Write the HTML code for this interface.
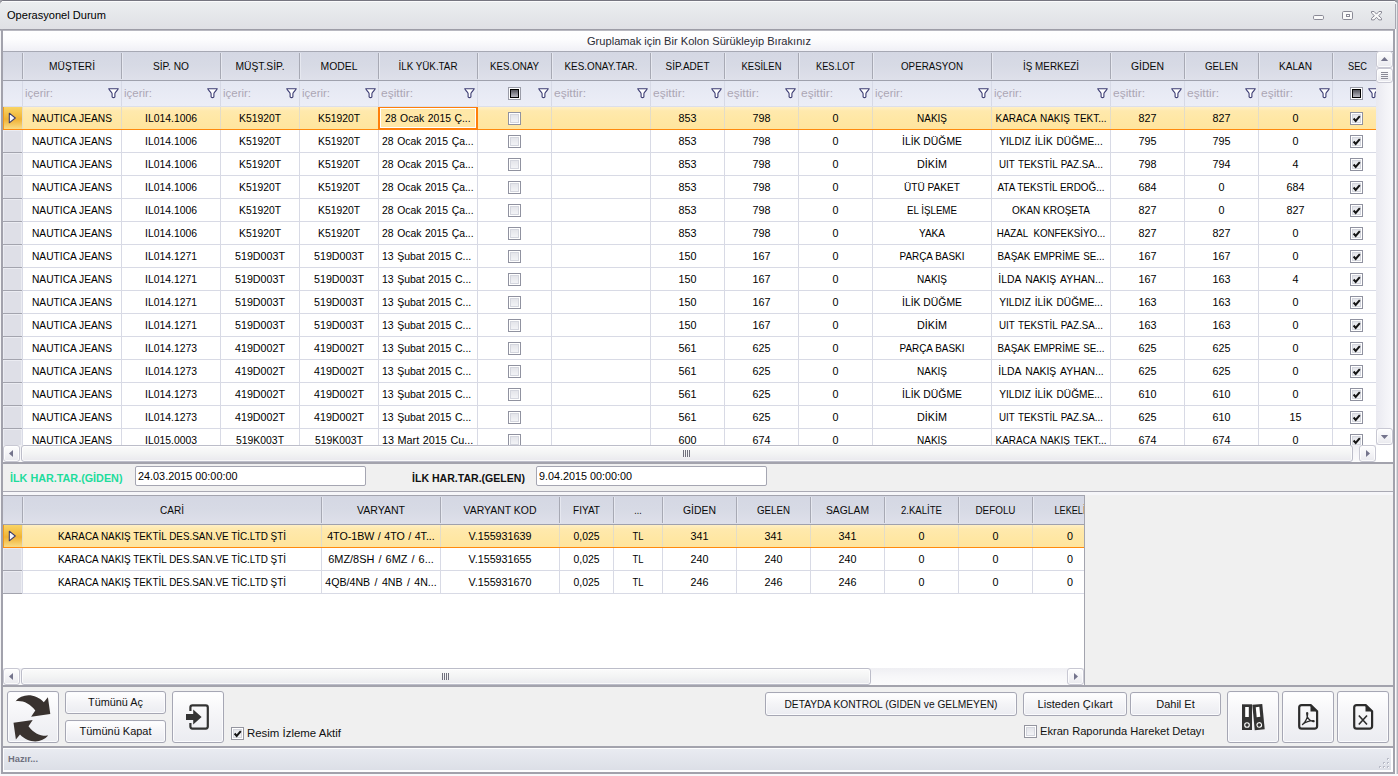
<!DOCTYPE html>
<html lang="tr"><head><meta charset="utf-8"><title>Operasyonel Durum</title>
<style>
html,body{margin:0;padding:0}
body{width:1398px;height:776px;overflow:hidden;background:#f0f0f0;position:relative;font-family:"Liberation Sans", sans-serif;font-size:10.5px;color:#000}
div,svg,span{position:absolute;display:block}
span{white-space:pre}
</style></head><body>
<div style="left:0px;top:0px;width:1398px;height:8px;background:#a4a4ac"></div>
<div style="left:0px;top:0px;width:1398px;height:29px;background:linear-gradient(#eceef0,#dfe0e5);border-radius:4px 5px 0 0;border-top:1px solid #767680;box-sizing:border-box"></div>
<div style="left:2px;top:1px;width:1393px;height:1px;background:#fbfbfc"></div>
<div style="left:0px;top:29px;width:1396px;height:1px;background:#9d9da7"></div>
<div style="left:0px;top:30px;width:1396px;height:1px;background:#b9b9c1"></div>
<svg style="left:1308px;top:6px" width="80" height="18" viewBox="1308 6 80 18">
<rect x="1313.5" y="15.5" width="10" height="4" rx="1.2" fill="#fafafa" stroke="#8a8a96"/>
<rect x="1342.5" y="11.5" width="10" height="8" rx="1.2" fill="#fafafa" stroke="#8a8a96"/>
<rect x="1346.5" y="14.5" width="3" height="2" fill="#fff" stroke="#8a8a96"/>
<path d="M1371.5 11.5h2.6l2.4 2.6 2.4-2.6h2.6v1.6l-2.9 2.6 2.9 2.6v1.6h-2.6l-2.4-2.6-2.4 2.6h-2.6v-1.6l2.9-2.6-2.9-2.6z" fill="#fafafa" stroke="#8a8a96" stroke-linejoin="round"/>
</svg>
<div style="left:1px;top:29px;width:2px;height:745px;background:#a2a2ac"></div>
<div style="left:1393px;top:29px;width:2px;height:745px;background:#a2a2ac"></div>
<div style="left:1395px;top:29px;width:1px;height:745px;background:#fafafa"></div>
<div style="left:1396px;top:29px;width:1px;height:745px;background:#dcdce1"></div>
<div style="left:1397px;top:4px;width:1px;height:770px;background:#b4b4bc"></div>
<div style="left:1395px;top:4px;width:1px;height:25px;background:#a8a8b2"></div>
<div style="left:0px;top:31px;width:1px;height:745px;background:#f4f4f6"></div>
<div style="left:3px;top:31px;width:1390px;height:20px;background:linear-gradient(#ffffff,#fdfdfe 40%,#f0f0f6)"></div>
<div style="left:3px;top:51px;width:1390px;height:1px;background:#a6a8b3"></div>
<div style="left:3px;top:52px;width:1373px;height:28px;background:linear-gradient(#d4d7e3,#d7dae5 50%,#dee0ea)"></div>
<div style="left:3px;top:80px;width:1373px;height:1px;background:#9fa1ad"></div>
<div style="left:3px;top:81px;width:1373px;height:26px;background:linear-gradient(#e4e7f2,#eceef7)"></div>
<div style="left:3px;top:106px;width:1373px;height:1px;background:#dcdfea"></div>
<div style="left:22px;top:53px;width:1px;height:26px;background:#a7a9b4"></div>
<div style="left:23px;top:53px;width:1px;height:26px;background:#e6e8f0"></div>
<div style="left:22px;top:81px;width:1px;height:25px;background:#d6d9e6"></div>
<div style="left:121px;top:53px;width:1px;height:26px;background:#a7a9b4"></div>
<div style="left:122px;top:53px;width:1px;height:26px;background:#e6e8f0"></div>
<div style="left:121px;top:81px;width:1px;height:25px;background:#d6d9e6"></div>
<div style="left:220px;top:53px;width:1px;height:26px;background:#a7a9b4"></div>
<div style="left:221px;top:53px;width:1px;height:26px;background:#e6e8f0"></div>
<div style="left:220px;top:81px;width:1px;height:25px;background:#d6d9e6"></div>
<div style="left:299px;top:53px;width:1px;height:26px;background:#a7a9b4"></div>
<div style="left:300px;top:53px;width:1px;height:26px;background:#e6e8f0"></div>
<div style="left:299px;top:81px;width:1px;height:25px;background:#d6d9e6"></div>
<div style="left:378px;top:53px;width:1px;height:26px;background:#a7a9b4"></div>
<div style="left:379px;top:53px;width:1px;height:26px;background:#e6e8f0"></div>
<div style="left:378px;top:81px;width:1px;height:25px;background:#d6d9e6"></div>
<div style="left:477px;top:53px;width:1px;height:26px;background:#a7a9b4"></div>
<div style="left:478px;top:53px;width:1px;height:26px;background:#e6e8f0"></div>
<div style="left:477px;top:81px;width:1px;height:25px;background:#d6d9e6"></div>
<div style="left:551px;top:53px;width:1px;height:26px;background:#a7a9b4"></div>
<div style="left:552px;top:53px;width:1px;height:26px;background:#e6e8f0"></div>
<div style="left:551px;top:81px;width:1px;height:25px;background:#d6d9e6"></div>
<div style="left:650px;top:53px;width:1px;height:26px;background:#a7a9b4"></div>
<div style="left:651px;top:53px;width:1px;height:26px;background:#e6e8f0"></div>
<div style="left:650px;top:81px;width:1px;height:25px;background:#d6d9e6"></div>
<div style="left:724px;top:53px;width:1px;height:26px;background:#a7a9b4"></div>
<div style="left:725px;top:53px;width:1px;height:26px;background:#e6e8f0"></div>
<div style="left:724px;top:81px;width:1px;height:25px;background:#d6d9e6"></div>
<div style="left:798px;top:53px;width:1px;height:26px;background:#a7a9b4"></div>
<div style="left:799px;top:53px;width:1px;height:26px;background:#e6e8f0"></div>
<div style="left:798px;top:81px;width:1px;height:25px;background:#d6d9e6"></div>
<div style="left:872px;top:53px;width:1px;height:26px;background:#a7a9b4"></div>
<div style="left:873px;top:53px;width:1px;height:26px;background:#e6e8f0"></div>
<div style="left:872px;top:81px;width:1px;height:25px;background:#d6d9e6"></div>
<div style="left:991px;top:53px;width:1px;height:26px;background:#a7a9b4"></div>
<div style="left:992px;top:53px;width:1px;height:26px;background:#e6e8f0"></div>
<div style="left:991px;top:81px;width:1px;height:25px;background:#d6d9e6"></div>
<div style="left:1110px;top:53px;width:1px;height:26px;background:#a7a9b4"></div>
<div style="left:1111px;top:53px;width:1px;height:26px;background:#e6e8f0"></div>
<div style="left:1110px;top:81px;width:1px;height:25px;background:#d6d9e6"></div>
<div style="left:1184px;top:53px;width:1px;height:26px;background:#a7a9b4"></div>
<div style="left:1185px;top:53px;width:1px;height:26px;background:#e6e8f0"></div>
<div style="left:1184px;top:81px;width:1px;height:25px;background:#d6d9e6"></div>
<div style="left:1258px;top:53px;width:1px;height:26px;background:#a7a9b4"></div>
<div style="left:1259px;top:53px;width:1px;height:26px;background:#e6e8f0"></div>
<div style="left:1258px;top:81px;width:1px;height:25px;background:#d6d9e6"></div>
<div style="left:1332px;top:53px;width:1px;height:26px;background:#a7a9b4"></div>
<div style="left:1333px;top:53px;width:1px;height:26px;background:#e6e8f0"></div>
<div style="left:1332px;top:81px;width:1px;height:25px;background:#d6d9e6"></div>
<svg style="left:108px;top:88px" width="11" height="11" viewBox="0 0 11 11"><path d="M0.7 0.7H10.3C9.6 3 7.2 3.6 6.9 5.6V8.8Q5.5 10.4 4.1 8.8V5.6C3.800 3.600 1.400 3 0.7 0.7Z" fill="#fff" stroke="#3d3d73" stroke-width="1.1" stroke-linejoin="round"/></svg>
<svg style="left:207px;top:88px" width="11" height="11" viewBox="0 0 11 11"><path d="M0.7 0.7H10.3C9.6 3 7.2 3.6 6.9 5.6V8.8Q5.5 10.4 4.1 8.8V5.6C3.800 3.600 1.400 3 0.7 0.7Z" fill="#fff" stroke="#3d3d73" stroke-width="1.1" stroke-linejoin="round"/></svg>
<svg style="left:286px;top:88px" width="11" height="11" viewBox="0 0 11 11"><path d="M0.7 0.7H10.3C9.6 3 7.2 3.6 6.9 5.6V8.8Q5.5 10.4 4.1 8.8V5.6C3.800 3.600 1.400 3 0.7 0.7Z" fill="#fff" stroke="#3d3d73" stroke-width="1.1" stroke-linejoin="round"/></svg>
<svg style="left:365px;top:88px" width="11" height="11" viewBox="0 0 11 11"><path d="M0.7 0.7H10.3C9.6 3 7.2 3.6 6.9 5.6V8.8Q5.5 10.4 4.1 8.8V5.6C3.800 3.600 1.400 3 0.7 0.7Z" fill="#fff" stroke="#3d3d73" stroke-width="1.1" stroke-linejoin="round"/></svg>
<svg style="left:464px;top:88px" width="11" height="11" viewBox="0 0 11 11"><path d="M0.7 0.7H10.3C9.6 3 7.2 3.6 6.9 5.6V8.8Q5.5 10.4 4.1 8.8V5.6C3.800 3.600 1.400 3 0.7 0.7Z" fill="#fff" stroke="#3d3d73" stroke-width="1.1" stroke-linejoin="round"/></svg>
<div style="left:508px;top:87px;width:11px;height:11px;border:1px solid #9a9ca8;background:#fff"><div style="left:1px;top:1px;width:7px;height:7px;border:1px solid #000;background:linear-gradient(#55555c,#b8b8c0)"></div></div>
<svg style="left:538px;top:88px" width="11" height="11" viewBox="0 0 11 11"><path d="M0.7 0.7H10.3C9.6 3 7.2 3.6 6.9 5.6V8.8Q5.5 10.4 4.1 8.8V5.6C3.800 3.600 1.400 3 0.7 0.7Z" fill="#fff" stroke="#3d3d73" stroke-width="1.1" stroke-linejoin="round"/></svg>
<svg style="left:637px;top:88px" width="11" height="11" viewBox="0 0 11 11"><path d="M0.7 0.7H10.3C9.6 3 7.2 3.6 6.9 5.6V8.8Q5.5 10.4 4.1 8.8V5.6C3.800 3.600 1.400 3 0.7 0.7Z" fill="#fff" stroke="#3d3d73" stroke-width="1.1" stroke-linejoin="round"/></svg>
<svg style="left:711px;top:88px" width="11" height="11" viewBox="0 0 11 11"><path d="M0.7 0.7H10.3C9.6 3 7.2 3.6 6.9 5.6V8.8Q5.5 10.4 4.1 8.8V5.6C3.800 3.600 1.400 3 0.7 0.7Z" fill="#fff" stroke="#3d3d73" stroke-width="1.1" stroke-linejoin="round"/></svg>
<svg style="left:785px;top:88px" width="11" height="11" viewBox="0 0 11 11"><path d="M0.7 0.7H10.3C9.6 3 7.2 3.6 6.9 5.6V8.8Q5.5 10.4 4.1 8.8V5.6C3.800 3.600 1.400 3 0.7 0.7Z" fill="#fff" stroke="#3d3d73" stroke-width="1.1" stroke-linejoin="round"/></svg>
<svg style="left:859px;top:88px" width="11" height="11" viewBox="0 0 11 11"><path d="M0.7 0.7H10.3C9.6 3 7.2 3.6 6.9 5.6V8.8Q5.5 10.4 4.1 8.8V5.6C3.800 3.600 1.400 3 0.7 0.7Z" fill="#fff" stroke="#3d3d73" stroke-width="1.1" stroke-linejoin="round"/></svg>
<svg style="left:978px;top:88px" width="11" height="11" viewBox="0 0 11 11"><path d="M0.7 0.7H10.3C9.6 3 7.2 3.6 6.9 5.6V8.8Q5.5 10.4 4.1 8.8V5.6C3.800 3.600 1.400 3 0.7 0.7Z" fill="#fff" stroke="#3d3d73" stroke-width="1.1" stroke-linejoin="round"/></svg>
<svg style="left:1097px;top:88px" width="11" height="11" viewBox="0 0 11 11"><path d="M0.7 0.7H10.3C9.6 3 7.2 3.6 6.9 5.6V8.8Q5.5 10.4 4.1 8.8V5.6C3.800 3.600 1.400 3 0.7 0.7Z" fill="#fff" stroke="#3d3d73" stroke-width="1.1" stroke-linejoin="round"/></svg>
<svg style="left:1171px;top:88px" width="11" height="11" viewBox="0 0 11 11"><path d="M0.7 0.7H10.3C9.6 3 7.2 3.6 6.9 5.6V8.8Q5.5 10.4 4.1 8.8V5.6C3.800 3.600 1.400 3 0.7 0.7Z" fill="#fff" stroke="#3d3d73" stroke-width="1.1" stroke-linejoin="round"/></svg>
<svg style="left:1245px;top:88px" width="11" height="11" viewBox="0 0 11 11"><path d="M0.7 0.7H10.3C9.6 3 7.2 3.6 6.9 5.6V8.8Q5.5 10.4 4.1 8.8V5.6C3.800 3.600 1.400 3 0.7 0.7Z" fill="#fff" stroke="#3d3d73" stroke-width="1.1" stroke-linejoin="round"/></svg>
<svg style="left:1319px;top:88px" width="11" height="11" viewBox="0 0 11 11"><path d="M0.7 0.7H10.3C9.6 3 7.2 3.6 6.9 5.6V8.8Q5.5 10.4 4.1 8.8V5.6C3.800 3.600 1.400 3 0.7 0.7Z" fill="#fff" stroke="#3d3d73" stroke-width="1.1" stroke-linejoin="round"/></svg>
<div style="left:1350px;top:87px;width:11px;height:11px;border:1px solid #9a9ca8;background:#fff"><div style="left:1px;top:1px;width:7px;height:7px;border:1px solid #000;background:linear-gradient(#55555c,#b8b8c0)"></div></div>
<svg style="left:1368px;top:88px" width="11" height="11" viewBox="0 0 11 11"><path d="M0.7 0.7H10.3C9.6 3 7.2 3.6 6.9 5.6V8.8Q5.5 10.4 4.1 8.8V5.6C3.800 3.600 1.400 3 0.7 0.7Z" fill="#fff" stroke="#3d3d73" stroke-width="1.1" stroke-linejoin="round"/></svg>
<div style="left:3px;top:107px;width:1373px;height:338px;overflow:hidden;background:#fff" id="g1">
<div style="left:19px;top:0px;width:1354px;height:22px;background:linear-gradient(#fff0c6,#ffe9ad 18%,#ffe7a4 60%,#ffe59e)"></div>
<div style="left:0px;top:22px;width:1373px;height:1px;background:#ff8a0e"></div>
<div style="left:0px;top:0px;width:19px;height:22px;background:linear-gradient(#f9d465,#f2b93c 45%,#f0b134 55%,#f9dc86);border-left:1px solid #f09a1c;box-sizing:border-box"></div>
<svg style="left:5px;top:5px" width="9" height="12" viewBox="0 0 9 12"><path d="M1.3 1.2L7.300 6 1.3 10.800z" fill="#f6f6fb" stroke="#3b3b6b" stroke-width="1.05" stroke-linejoin="round"/></svg>
<div style="left:19px;top:0px;width:1px;height:22px;background:#e3dcc8"></div>
<div style="left:118px;top:0px;width:1px;height:22px;background:#e3dcc8"></div>
<div style="left:217px;top:0px;width:1px;height:22px;background:#e3dcc8"></div>
<div style="left:296px;top:0px;width:1px;height:22px;background:#e3dcc8"></div>
<div style="left:375px;top:0px;width:1px;height:22px;background:#e3dcc8"></div>
<div style="left:474px;top:0px;width:1px;height:22px;background:#e3dcc8"></div>
<div style="left:548px;top:0px;width:1px;height:22px;background:#e3dcc8"></div>
<div style="left:647px;top:0px;width:1px;height:22px;background:#e3dcc8"></div>
<div style="left:721px;top:0px;width:1px;height:22px;background:#e3dcc8"></div>
<div style="left:795px;top:0px;width:1px;height:22px;background:#e3dcc8"></div>
<div style="left:869px;top:0px;width:1px;height:22px;background:#e3dcc8"></div>
<div style="left:988px;top:0px;width:1px;height:22px;background:#e3dcc8"></div>
<div style="left:1107px;top:0px;width:1px;height:22px;background:#e3dcc8"></div>
<div style="left:1181px;top:0px;width:1px;height:22px;background:#e3dcc8"></div>
<div style="left:1255px;top:0px;width:1px;height:22px;background:#e3dcc8"></div>
<div style="left:1329px;top:0px;width:1px;height:22px;background:#e3dcc8"></div>
<div style="left:505px;top:5px;width:11px;height:11px;border:1px solid #9092a0;background:#fff"><div style="left:1px;top:1px;width:7px;height:7px;border:1px solid #d4d6de;background:linear-gradient(#e4e5ea,#f2f3f6)"></div></div>
<div style="left:1347px;top:5px;width:11px;height:11px;border:1px solid #9092a0;background:#fff"><div style="left:1px;top:1px;width:7px;height:7px;border:1px solid #d4d6de;background:linear-gradient(#e4e5ea,#f2f3f6)"></div><svg style="left:1px;top:1px" width="9" height="9" viewBox="0 0 9 9"><path d="M1.6 4.500l2.100 2.500 4.100-4.900" fill="none" stroke="#151515" stroke-width="2"/></svg></div>
<div style="left:19px;top:45px;width:1354px;height:1px;background:#d8dae5"></div>
<div style="left:0px;top:23px;width:19px;height:22px;background:#dedfe7;border:1px solid #ebecf2;border-bottom:none;box-sizing:border-box"></div>
<div style="left:0px;top:45px;width:19px;height:1px;background:#a3a4ae"></div>
<div style="left:19px;top:23px;width:1px;height:22px;background:#d8dae5"></div>
<div style="left:118px;top:23px;width:1px;height:22px;background:#d8dae5"></div>
<div style="left:217px;top:23px;width:1px;height:22px;background:#d8dae5"></div>
<div style="left:296px;top:23px;width:1px;height:22px;background:#d8dae5"></div>
<div style="left:375px;top:23px;width:1px;height:22px;background:#d8dae5"></div>
<div style="left:474px;top:23px;width:1px;height:22px;background:#d8dae5"></div>
<div style="left:548px;top:23px;width:1px;height:22px;background:#d8dae5"></div>
<div style="left:647px;top:23px;width:1px;height:22px;background:#d8dae5"></div>
<div style="left:721px;top:23px;width:1px;height:22px;background:#d8dae5"></div>
<div style="left:795px;top:23px;width:1px;height:22px;background:#d8dae5"></div>
<div style="left:869px;top:23px;width:1px;height:22px;background:#d8dae5"></div>
<div style="left:988px;top:23px;width:1px;height:22px;background:#d8dae5"></div>
<div style="left:1107px;top:23px;width:1px;height:22px;background:#d8dae5"></div>
<div style="left:1181px;top:23px;width:1px;height:22px;background:#d8dae5"></div>
<div style="left:1255px;top:23px;width:1px;height:22px;background:#d8dae5"></div>
<div style="left:1329px;top:23px;width:1px;height:22px;background:#d8dae5"></div>
<div style="left:505px;top:28px;width:11px;height:11px;border:1px solid #9092a0;background:#fff"><div style="left:1px;top:1px;width:7px;height:7px;border:1px solid #d4d6de;background:linear-gradient(#e4e5ea,#f2f3f6)"></div></div>
<div style="left:1347px;top:28px;width:11px;height:11px;border:1px solid #9092a0;background:#fff"><div style="left:1px;top:1px;width:7px;height:7px;border:1px solid #d4d6de;background:linear-gradient(#e4e5ea,#f2f3f6)"></div><svg style="left:1px;top:1px" width="9" height="9" viewBox="0 0 9 9"><path d="M1.6 4.500l2.100 2.500 4.100-4.900" fill="none" stroke="#151515" stroke-width="2"/></svg></div>
<div style="left:19px;top:68px;width:1354px;height:1px;background:#d8dae5"></div>
<div style="left:0px;top:46px;width:19px;height:22px;background:#dedfe7;border:1px solid #ebecf2;border-bottom:none;box-sizing:border-box"></div>
<div style="left:0px;top:68px;width:19px;height:1px;background:#a3a4ae"></div>
<div style="left:19px;top:46px;width:1px;height:22px;background:#d8dae5"></div>
<div style="left:118px;top:46px;width:1px;height:22px;background:#d8dae5"></div>
<div style="left:217px;top:46px;width:1px;height:22px;background:#d8dae5"></div>
<div style="left:296px;top:46px;width:1px;height:22px;background:#d8dae5"></div>
<div style="left:375px;top:46px;width:1px;height:22px;background:#d8dae5"></div>
<div style="left:474px;top:46px;width:1px;height:22px;background:#d8dae5"></div>
<div style="left:548px;top:46px;width:1px;height:22px;background:#d8dae5"></div>
<div style="left:647px;top:46px;width:1px;height:22px;background:#d8dae5"></div>
<div style="left:721px;top:46px;width:1px;height:22px;background:#d8dae5"></div>
<div style="left:795px;top:46px;width:1px;height:22px;background:#d8dae5"></div>
<div style="left:869px;top:46px;width:1px;height:22px;background:#d8dae5"></div>
<div style="left:988px;top:46px;width:1px;height:22px;background:#d8dae5"></div>
<div style="left:1107px;top:46px;width:1px;height:22px;background:#d8dae5"></div>
<div style="left:1181px;top:46px;width:1px;height:22px;background:#d8dae5"></div>
<div style="left:1255px;top:46px;width:1px;height:22px;background:#d8dae5"></div>
<div style="left:1329px;top:46px;width:1px;height:22px;background:#d8dae5"></div>
<div style="left:505px;top:51px;width:11px;height:11px;border:1px solid #9092a0;background:#fff"><div style="left:1px;top:1px;width:7px;height:7px;border:1px solid #d4d6de;background:linear-gradient(#e4e5ea,#f2f3f6)"></div></div>
<div style="left:1347px;top:51px;width:11px;height:11px;border:1px solid #9092a0;background:#fff"><div style="left:1px;top:1px;width:7px;height:7px;border:1px solid #d4d6de;background:linear-gradient(#e4e5ea,#f2f3f6)"></div><svg style="left:1px;top:1px" width="9" height="9" viewBox="0 0 9 9"><path d="M1.6 4.500l2.100 2.500 4.100-4.900" fill="none" stroke="#151515" stroke-width="2"/></svg></div>
<div style="left:19px;top:91px;width:1354px;height:1px;background:#d8dae5"></div>
<div style="left:0px;top:69px;width:19px;height:22px;background:#dedfe7;border:1px solid #ebecf2;border-bottom:none;box-sizing:border-box"></div>
<div style="left:0px;top:91px;width:19px;height:1px;background:#a3a4ae"></div>
<div style="left:19px;top:69px;width:1px;height:22px;background:#d8dae5"></div>
<div style="left:118px;top:69px;width:1px;height:22px;background:#d8dae5"></div>
<div style="left:217px;top:69px;width:1px;height:22px;background:#d8dae5"></div>
<div style="left:296px;top:69px;width:1px;height:22px;background:#d8dae5"></div>
<div style="left:375px;top:69px;width:1px;height:22px;background:#d8dae5"></div>
<div style="left:474px;top:69px;width:1px;height:22px;background:#d8dae5"></div>
<div style="left:548px;top:69px;width:1px;height:22px;background:#d8dae5"></div>
<div style="left:647px;top:69px;width:1px;height:22px;background:#d8dae5"></div>
<div style="left:721px;top:69px;width:1px;height:22px;background:#d8dae5"></div>
<div style="left:795px;top:69px;width:1px;height:22px;background:#d8dae5"></div>
<div style="left:869px;top:69px;width:1px;height:22px;background:#d8dae5"></div>
<div style="left:988px;top:69px;width:1px;height:22px;background:#d8dae5"></div>
<div style="left:1107px;top:69px;width:1px;height:22px;background:#d8dae5"></div>
<div style="left:1181px;top:69px;width:1px;height:22px;background:#d8dae5"></div>
<div style="left:1255px;top:69px;width:1px;height:22px;background:#d8dae5"></div>
<div style="left:1329px;top:69px;width:1px;height:22px;background:#d8dae5"></div>
<div style="left:505px;top:74px;width:11px;height:11px;border:1px solid #9092a0;background:#fff"><div style="left:1px;top:1px;width:7px;height:7px;border:1px solid #d4d6de;background:linear-gradient(#e4e5ea,#f2f3f6)"></div></div>
<div style="left:1347px;top:74px;width:11px;height:11px;border:1px solid #9092a0;background:#fff"><div style="left:1px;top:1px;width:7px;height:7px;border:1px solid #d4d6de;background:linear-gradient(#e4e5ea,#f2f3f6)"></div><svg style="left:1px;top:1px" width="9" height="9" viewBox="0 0 9 9"><path d="M1.6 4.500l2.100 2.500 4.100-4.900" fill="none" stroke="#151515" stroke-width="2"/></svg></div>
<div style="left:19px;top:114px;width:1354px;height:1px;background:#d8dae5"></div>
<div style="left:0px;top:92px;width:19px;height:22px;background:#dedfe7;border:1px solid #ebecf2;border-bottom:none;box-sizing:border-box"></div>
<div style="left:0px;top:114px;width:19px;height:1px;background:#a3a4ae"></div>
<div style="left:19px;top:92px;width:1px;height:22px;background:#d8dae5"></div>
<div style="left:118px;top:92px;width:1px;height:22px;background:#d8dae5"></div>
<div style="left:217px;top:92px;width:1px;height:22px;background:#d8dae5"></div>
<div style="left:296px;top:92px;width:1px;height:22px;background:#d8dae5"></div>
<div style="left:375px;top:92px;width:1px;height:22px;background:#d8dae5"></div>
<div style="left:474px;top:92px;width:1px;height:22px;background:#d8dae5"></div>
<div style="left:548px;top:92px;width:1px;height:22px;background:#d8dae5"></div>
<div style="left:647px;top:92px;width:1px;height:22px;background:#d8dae5"></div>
<div style="left:721px;top:92px;width:1px;height:22px;background:#d8dae5"></div>
<div style="left:795px;top:92px;width:1px;height:22px;background:#d8dae5"></div>
<div style="left:869px;top:92px;width:1px;height:22px;background:#d8dae5"></div>
<div style="left:988px;top:92px;width:1px;height:22px;background:#d8dae5"></div>
<div style="left:1107px;top:92px;width:1px;height:22px;background:#d8dae5"></div>
<div style="left:1181px;top:92px;width:1px;height:22px;background:#d8dae5"></div>
<div style="left:1255px;top:92px;width:1px;height:22px;background:#d8dae5"></div>
<div style="left:1329px;top:92px;width:1px;height:22px;background:#d8dae5"></div>
<div style="left:505px;top:97px;width:11px;height:11px;border:1px solid #9092a0;background:#fff"><div style="left:1px;top:1px;width:7px;height:7px;border:1px solid #d4d6de;background:linear-gradient(#e4e5ea,#f2f3f6)"></div></div>
<div style="left:1347px;top:97px;width:11px;height:11px;border:1px solid #9092a0;background:#fff"><div style="left:1px;top:1px;width:7px;height:7px;border:1px solid #d4d6de;background:linear-gradient(#e4e5ea,#f2f3f6)"></div><svg style="left:1px;top:1px" width="9" height="9" viewBox="0 0 9 9"><path d="M1.6 4.500l2.100 2.500 4.100-4.900" fill="none" stroke="#151515" stroke-width="2"/></svg></div>
<div style="left:19px;top:137px;width:1354px;height:1px;background:#d8dae5"></div>
<div style="left:0px;top:115px;width:19px;height:22px;background:#dedfe7;border:1px solid #ebecf2;border-bottom:none;box-sizing:border-box"></div>
<div style="left:0px;top:137px;width:19px;height:1px;background:#a3a4ae"></div>
<div style="left:19px;top:115px;width:1px;height:22px;background:#d8dae5"></div>
<div style="left:118px;top:115px;width:1px;height:22px;background:#d8dae5"></div>
<div style="left:217px;top:115px;width:1px;height:22px;background:#d8dae5"></div>
<div style="left:296px;top:115px;width:1px;height:22px;background:#d8dae5"></div>
<div style="left:375px;top:115px;width:1px;height:22px;background:#d8dae5"></div>
<div style="left:474px;top:115px;width:1px;height:22px;background:#d8dae5"></div>
<div style="left:548px;top:115px;width:1px;height:22px;background:#d8dae5"></div>
<div style="left:647px;top:115px;width:1px;height:22px;background:#d8dae5"></div>
<div style="left:721px;top:115px;width:1px;height:22px;background:#d8dae5"></div>
<div style="left:795px;top:115px;width:1px;height:22px;background:#d8dae5"></div>
<div style="left:869px;top:115px;width:1px;height:22px;background:#d8dae5"></div>
<div style="left:988px;top:115px;width:1px;height:22px;background:#d8dae5"></div>
<div style="left:1107px;top:115px;width:1px;height:22px;background:#d8dae5"></div>
<div style="left:1181px;top:115px;width:1px;height:22px;background:#d8dae5"></div>
<div style="left:1255px;top:115px;width:1px;height:22px;background:#d8dae5"></div>
<div style="left:1329px;top:115px;width:1px;height:22px;background:#d8dae5"></div>
<div style="left:505px;top:120px;width:11px;height:11px;border:1px solid #9092a0;background:#fff"><div style="left:1px;top:1px;width:7px;height:7px;border:1px solid #d4d6de;background:linear-gradient(#e4e5ea,#f2f3f6)"></div></div>
<div style="left:1347px;top:120px;width:11px;height:11px;border:1px solid #9092a0;background:#fff"><div style="left:1px;top:1px;width:7px;height:7px;border:1px solid #d4d6de;background:linear-gradient(#e4e5ea,#f2f3f6)"></div><svg style="left:1px;top:1px" width="9" height="9" viewBox="0 0 9 9"><path d="M1.6 4.500l2.100 2.500 4.100-4.900" fill="none" stroke="#151515" stroke-width="2"/></svg></div>
<div style="left:19px;top:160px;width:1354px;height:1px;background:#d8dae5"></div>
<div style="left:0px;top:138px;width:19px;height:22px;background:#dedfe7;border:1px solid #ebecf2;border-bottom:none;box-sizing:border-box"></div>
<div style="left:0px;top:160px;width:19px;height:1px;background:#a3a4ae"></div>
<div style="left:19px;top:138px;width:1px;height:22px;background:#d8dae5"></div>
<div style="left:118px;top:138px;width:1px;height:22px;background:#d8dae5"></div>
<div style="left:217px;top:138px;width:1px;height:22px;background:#d8dae5"></div>
<div style="left:296px;top:138px;width:1px;height:22px;background:#d8dae5"></div>
<div style="left:375px;top:138px;width:1px;height:22px;background:#d8dae5"></div>
<div style="left:474px;top:138px;width:1px;height:22px;background:#d8dae5"></div>
<div style="left:548px;top:138px;width:1px;height:22px;background:#d8dae5"></div>
<div style="left:647px;top:138px;width:1px;height:22px;background:#d8dae5"></div>
<div style="left:721px;top:138px;width:1px;height:22px;background:#d8dae5"></div>
<div style="left:795px;top:138px;width:1px;height:22px;background:#d8dae5"></div>
<div style="left:869px;top:138px;width:1px;height:22px;background:#d8dae5"></div>
<div style="left:988px;top:138px;width:1px;height:22px;background:#d8dae5"></div>
<div style="left:1107px;top:138px;width:1px;height:22px;background:#d8dae5"></div>
<div style="left:1181px;top:138px;width:1px;height:22px;background:#d8dae5"></div>
<div style="left:1255px;top:138px;width:1px;height:22px;background:#d8dae5"></div>
<div style="left:1329px;top:138px;width:1px;height:22px;background:#d8dae5"></div>
<div style="left:505px;top:143px;width:11px;height:11px;border:1px solid #9092a0;background:#fff"><div style="left:1px;top:1px;width:7px;height:7px;border:1px solid #d4d6de;background:linear-gradient(#e4e5ea,#f2f3f6)"></div></div>
<div style="left:1347px;top:143px;width:11px;height:11px;border:1px solid #9092a0;background:#fff"><div style="left:1px;top:1px;width:7px;height:7px;border:1px solid #d4d6de;background:linear-gradient(#e4e5ea,#f2f3f6)"></div><svg style="left:1px;top:1px" width="9" height="9" viewBox="0 0 9 9"><path d="M1.6 4.500l2.100 2.500 4.100-4.900" fill="none" stroke="#151515" stroke-width="2"/></svg></div>
<div style="left:19px;top:183px;width:1354px;height:1px;background:#d8dae5"></div>
<div style="left:0px;top:161px;width:19px;height:22px;background:#dedfe7;border:1px solid #ebecf2;border-bottom:none;box-sizing:border-box"></div>
<div style="left:0px;top:183px;width:19px;height:1px;background:#a3a4ae"></div>
<div style="left:19px;top:161px;width:1px;height:22px;background:#d8dae5"></div>
<div style="left:118px;top:161px;width:1px;height:22px;background:#d8dae5"></div>
<div style="left:217px;top:161px;width:1px;height:22px;background:#d8dae5"></div>
<div style="left:296px;top:161px;width:1px;height:22px;background:#d8dae5"></div>
<div style="left:375px;top:161px;width:1px;height:22px;background:#d8dae5"></div>
<div style="left:474px;top:161px;width:1px;height:22px;background:#d8dae5"></div>
<div style="left:548px;top:161px;width:1px;height:22px;background:#d8dae5"></div>
<div style="left:647px;top:161px;width:1px;height:22px;background:#d8dae5"></div>
<div style="left:721px;top:161px;width:1px;height:22px;background:#d8dae5"></div>
<div style="left:795px;top:161px;width:1px;height:22px;background:#d8dae5"></div>
<div style="left:869px;top:161px;width:1px;height:22px;background:#d8dae5"></div>
<div style="left:988px;top:161px;width:1px;height:22px;background:#d8dae5"></div>
<div style="left:1107px;top:161px;width:1px;height:22px;background:#d8dae5"></div>
<div style="left:1181px;top:161px;width:1px;height:22px;background:#d8dae5"></div>
<div style="left:1255px;top:161px;width:1px;height:22px;background:#d8dae5"></div>
<div style="left:1329px;top:161px;width:1px;height:22px;background:#d8dae5"></div>
<div style="left:505px;top:166px;width:11px;height:11px;border:1px solid #9092a0;background:#fff"><div style="left:1px;top:1px;width:7px;height:7px;border:1px solid #d4d6de;background:linear-gradient(#e4e5ea,#f2f3f6)"></div></div>
<div style="left:1347px;top:166px;width:11px;height:11px;border:1px solid #9092a0;background:#fff"><div style="left:1px;top:1px;width:7px;height:7px;border:1px solid #d4d6de;background:linear-gradient(#e4e5ea,#f2f3f6)"></div><svg style="left:1px;top:1px" width="9" height="9" viewBox="0 0 9 9"><path d="M1.6 4.500l2.100 2.500 4.100-4.900" fill="none" stroke="#151515" stroke-width="2"/></svg></div>
<div style="left:19px;top:206px;width:1354px;height:1px;background:#d8dae5"></div>
<div style="left:0px;top:184px;width:19px;height:22px;background:#dedfe7;border:1px solid #ebecf2;border-bottom:none;box-sizing:border-box"></div>
<div style="left:0px;top:206px;width:19px;height:1px;background:#a3a4ae"></div>
<div style="left:19px;top:184px;width:1px;height:22px;background:#d8dae5"></div>
<div style="left:118px;top:184px;width:1px;height:22px;background:#d8dae5"></div>
<div style="left:217px;top:184px;width:1px;height:22px;background:#d8dae5"></div>
<div style="left:296px;top:184px;width:1px;height:22px;background:#d8dae5"></div>
<div style="left:375px;top:184px;width:1px;height:22px;background:#d8dae5"></div>
<div style="left:474px;top:184px;width:1px;height:22px;background:#d8dae5"></div>
<div style="left:548px;top:184px;width:1px;height:22px;background:#d8dae5"></div>
<div style="left:647px;top:184px;width:1px;height:22px;background:#d8dae5"></div>
<div style="left:721px;top:184px;width:1px;height:22px;background:#d8dae5"></div>
<div style="left:795px;top:184px;width:1px;height:22px;background:#d8dae5"></div>
<div style="left:869px;top:184px;width:1px;height:22px;background:#d8dae5"></div>
<div style="left:988px;top:184px;width:1px;height:22px;background:#d8dae5"></div>
<div style="left:1107px;top:184px;width:1px;height:22px;background:#d8dae5"></div>
<div style="left:1181px;top:184px;width:1px;height:22px;background:#d8dae5"></div>
<div style="left:1255px;top:184px;width:1px;height:22px;background:#d8dae5"></div>
<div style="left:1329px;top:184px;width:1px;height:22px;background:#d8dae5"></div>
<div style="left:505px;top:189px;width:11px;height:11px;border:1px solid #9092a0;background:#fff"><div style="left:1px;top:1px;width:7px;height:7px;border:1px solid #d4d6de;background:linear-gradient(#e4e5ea,#f2f3f6)"></div></div>
<div style="left:1347px;top:189px;width:11px;height:11px;border:1px solid #9092a0;background:#fff"><div style="left:1px;top:1px;width:7px;height:7px;border:1px solid #d4d6de;background:linear-gradient(#e4e5ea,#f2f3f6)"></div><svg style="left:1px;top:1px" width="9" height="9" viewBox="0 0 9 9"><path d="M1.6 4.500l2.100 2.500 4.100-4.900" fill="none" stroke="#151515" stroke-width="2"/></svg></div>
<div style="left:19px;top:229px;width:1354px;height:1px;background:#d8dae5"></div>
<div style="left:0px;top:207px;width:19px;height:22px;background:#dedfe7;border:1px solid #ebecf2;border-bottom:none;box-sizing:border-box"></div>
<div style="left:0px;top:229px;width:19px;height:1px;background:#a3a4ae"></div>
<div style="left:19px;top:207px;width:1px;height:22px;background:#d8dae5"></div>
<div style="left:118px;top:207px;width:1px;height:22px;background:#d8dae5"></div>
<div style="left:217px;top:207px;width:1px;height:22px;background:#d8dae5"></div>
<div style="left:296px;top:207px;width:1px;height:22px;background:#d8dae5"></div>
<div style="left:375px;top:207px;width:1px;height:22px;background:#d8dae5"></div>
<div style="left:474px;top:207px;width:1px;height:22px;background:#d8dae5"></div>
<div style="left:548px;top:207px;width:1px;height:22px;background:#d8dae5"></div>
<div style="left:647px;top:207px;width:1px;height:22px;background:#d8dae5"></div>
<div style="left:721px;top:207px;width:1px;height:22px;background:#d8dae5"></div>
<div style="left:795px;top:207px;width:1px;height:22px;background:#d8dae5"></div>
<div style="left:869px;top:207px;width:1px;height:22px;background:#d8dae5"></div>
<div style="left:988px;top:207px;width:1px;height:22px;background:#d8dae5"></div>
<div style="left:1107px;top:207px;width:1px;height:22px;background:#d8dae5"></div>
<div style="left:1181px;top:207px;width:1px;height:22px;background:#d8dae5"></div>
<div style="left:1255px;top:207px;width:1px;height:22px;background:#d8dae5"></div>
<div style="left:1329px;top:207px;width:1px;height:22px;background:#d8dae5"></div>
<div style="left:505px;top:212px;width:11px;height:11px;border:1px solid #9092a0;background:#fff"><div style="left:1px;top:1px;width:7px;height:7px;border:1px solid #d4d6de;background:linear-gradient(#e4e5ea,#f2f3f6)"></div></div>
<div style="left:1347px;top:212px;width:11px;height:11px;border:1px solid #9092a0;background:#fff"><div style="left:1px;top:1px;width:7px;height:7px;border:1px solid #d4d6de;background:linear-gradient(#e4e5ea,#f2f3f6)"></div><svg style="left:1px;top:1px" width="9" height="9" viewBox="0 0 9 9"><path d="M1.6 4.500l2.100 2.500 4.100-4.900" fill="none" stroke="#151515" stroke-width="2"/></svg></div>
<div style="left:19px;top:252px;width:1354px;height:1px;background:#d8dae5"></div>
<div style="left:0px;top:230px;width:19px;height:22px;background:#dedfe7;border:1px solid #ebecf2;border-bottom:none;box-sizing:border-box"></div>
<div style="left:0px;top:252px;width:19px;height:1px;background:#a3a4ae"></div>
<div style="left:19px;top:230px;width:1px;height:22px;background:#d8dae5"></div>
<div style="left:118px;top:230px;width:1px;height:22px;background:#d8dae5"></div>
<div style="left:217px;top:230px;width:1px;height:22px;background:#d8dae5"></div>
<div style="left:296px;top:230px;width:1px;height:22px;background:#d8dae5"></div>
<div style="left:375px;top:230px;width:1px;height:22px;background:#d8dae5"></div>
<div style="left:474px;top:230px;width:1px;height:22px;background:#d8dae5"></div>
<div style="left:548px;top:230px;width:1px;height:22px;background:#d8dae5"></div>
<div style="left:647px;top:230px;width:1px;height:22px;background:#d8dae5"></div>
<div style="left:721px;top:230px;width:1px;height:22px;background:#d8dae5"></div>
<div style="left:795px;top:230px;width:1px;height:22px;background:#d8dae5"></div>
<div style="left:869px;top:230px;width:1px;height:22px;background:#d8dae5"></div>
<div style="left:988px;top:230px;width:1px;height:22px;background:#d8dae5"></div>
<div style="left:1107px;top:230px;width:1px;height:22px;background:#d8dae5"></div>
<div style="left:1181px;top:230px;width:1px;height:22px;background:#d8dae5"></div>
<div style="left:1255px;top:230px;width:1px;height:22px;background:#d8dae5"></div>
<div style="left:1329px;top:230px;width:1px;height:22px;background:#d8dae5"></div>
<div style="left:505px;top:235px;width:11px;height:11px;border:1px solid #9092a0;background:#fff"><div style="left:1px;top:1px;width:7px;height:7px;border:1px solid #d4d6de;background:linear-gradient(#e4e5ea,#f2f3f6)"></div></div>
<div style="left:1347px;top:235px;width:11px;height:11px;border:1px solid #9092a0;background:#fff"><div style="left:1px;top:1px;width:7px;height:7px;border:1px solid #d4d6de;background:linear-gradient(#e4e5ea,#f2f3f6)"></div><svg style="left:1px;top:1px" width="9" height="9" viewBox="0 0 9 9"><path d="M1.6 4.500l2.100 2.500 4.100-4.900" fill="none" stroke="#151515" stroke-width="2"/></svg></div>
<div style="left:19px;top:275px;width:1354px;height:1px;background:#d8dae5"></div>
<div style="left:0px;top:253px;width:19px;height:22px;background:#dedfe7;border:1px solid #ebecf2;border-bottom:none;box-sizing:border-box"></div>
<div style="left:0px;top:275px;width:19px;height:1px;background:#a3a4ae"></div>
<div style="left:19px;top:253px;width:1px;height:22px;background:#d8dae5"></div>
<div style="left:118px;top:253px;width:1px;height:22px;background:#d8dae5"></div>
<div style="left:217px;top:253px;width:1px;height:22px;background:#d8dae5"></div>
<div style="left:296px;top:253px;width:1px;height:22px;background:#d8dae5"></div>
<div style="left:375px;top:253px;width:1px;height:22px;background:#d8dae5"></div>
<div style="left:474px;top:253px;width:1px;height:22px;background:#d8dae5"></div>
<div style="left:548px;top:253px;width:1px;height:22px;background:#d8dae5"></div>
<div style="left:647px;top:253px;width:1px;height:22px;background:#d8dae5"></div>
<div style="left:721px;top:253px;width:1px;height:22px;background:#d8dae5"></div>
<div style="left:795px;top:253px;width:1px;height:22px;background:#d8dae5"></div>
<div style="left:869px;top:253px;width:1px;height:22px;background:#d8dae5"></div>
<div style="left:988px;top:253px;width:1px;height:22px;background:#d8dae5"></div>
<div style="left:1107px;top:253px;width:1px;height:22px;background:#d8dae5"></div>
<div style="left:1181px;top:253px;width:1px;height:22px;background:#d8dae5"></div>
<div style="left:1255px;top:253px;width:1px;height:22px;background:#d8dae5"></div>
<div style="left:1329px;top:253px;width:1px;height:22px;background:#d8dae5"></div>
<div style="left:505px;top:258px;width:11px;height:11px;border:1px solid #9092a0;background:#fff"><div style="left:1px;top:1px;width:7px;height:7px;border:1px solid #d4d6de;background:linear-gradient(#e4e5ea,#f2f3f6)"></div></div>
<div style="left:1347px;top:258px;width:11px;height:11px;border:1px solid #9092a0;background:#fff"><div style="left:1px;top:1px;width:7px;height:7px;border:1px solid #d4d6de;background:linear-gradient(#e4e5ea,#f2f3f6)"></div><svg style="left:1px;top:1px" width="9" height="9" viewBox="0 0 9 9"><path d="M1.6 4.500l2.100 2.500 4.100-4.900" fill="none" stroke="#151515" stroke-width="2"/></svg></div>
<div style="left:19px;top:298px;width:1354px;height:1px;background:#d8dae5"></div>
<div style="left:0px;top:276px;width:19px;height:22px;background:#dedfe7;border:1px solid #ebecf2;border-bottom:none;box-sizing:border-box"></div>
<div style="left:0px;top:298px;width:19px;height:1px;background:#a3a4ae"></div>
<div style="left:19px;top:276px;width:1px;height:22px;background:#d8dae5"></div>
<div style="left:118px;top:276px;width:1px;height:22px;background:#d8dae5"></div>
<div style="left:217px;top:276px;width:1px;height:22px;background:#d8dae5"></div>
<div style="left:296px;top:276px;width:1px;height:22px;background:#d8dae5"></div>
<div style="left:375px;top:276px;width:1px;height:22px;background:#d8dae5"></div>
<div style="left:474px;top:276px;width:1px;height:22px;background:#d8dae5"></div>
<div style="left:548px;top:276px;width:1px;height:22px;background:#d8dae5"></div>
<div style="left:647px;top:276px;width:1px;height:22px;background:#d8dae5"></div>
<div style="left:721px;top:276px;width:1px;height:22px;background:#d8dae5"></div>
<div style="left:795px;top:276px;width:1px;height:22px;background:#d8dae5"></div>
<div style="left:869px;top:276px;width:1px;height:22px;background:#d8dae5"></div>
<div style="left:988px;top:276px;width:1px;height:22px;background:#d8dae5"></div>
<div style="left:1107px;top:276px;width:1px;height:22px;background:#d8dae5"></div>
<div style="left:1181px;top:276px;width:1px;height:22px;background:#d8dae5"></div>
<div style="left:1255px;top:276px;width:1px;height:22px;background:#d8dae5"></div>
<div style="left:1329px;top:276px;width:1px;height:22px;background:#d8dae5"></div>
<div style="left:505px;top:281px;width:11px;height:11px;border:1px solid #9092a0;background:#fff"><div style="left:1px;top:1px;width:7px;height:7px;border:1px solid #d4d6de;background:linear-gradient(#e4e5ea,#f2f3f6)"></div></div>
<div style="left:1347px;top:281px;width:11px;height:11px;border:1px solid #9092a0;background:#fff"><div style="left:1px;top:1px;width:7px;height:7px;border:1px solid #d4d6de;background:linear-gradient(#e4e5ea,#f2f3f6)"></div><svg style="left:1px;top:1px" width="9" height="9" viewBox="0 0 9 9"><path d="M1.6 4.500l2.100 2.500 4.100-4.900" fill="none" stroke="#151515" stroke-width="2"/></svg></div>
<div style="left:19px;top:321px;width:1354px;height:1px;background:#d8dae5"></div>
<div style="left:0px;top:299px;width:19px;height:22px;background:#dedfe7;border:1px solid #ebecf2;border-bottom:none;box-sizing:border-box"></div>
<div style="left:0px;top:321px;width:19px;height:1px;background:#a3a4ae"></div>
<div style="left:19px;top:299px;width:1px;height:22px;background:#d8dae5"></div>
<div style="left:118px;top:299px;width:1px;height:22px;background:#d8dae5"></div>
<div style="left:217px;top:299px;width:1px;height:22px;background:#d8dae5"></div>
<div style="left:296px;top:299px;width:1px;height:22px;background:#d8dae5"></div>
<div style="left:375px;top:299px;width:1px;height:22px;background:#d8dae5"></div>
<div style="left:474px;top:299px;width:1px;height:22px;background:#d8dae5"></div>
<div style="left:548px;top:299px;width:1px;height:22px;background:#d8dae5"></div>
<div style="left:647px;top:299px;width:1px;height:22px;background:#d8dae5"></div>
<div style="left:721px;top:299px;width:1px;height:22px;background:#d8dae5"></div>
<div style="left:795px;top:299px;width:1px;height:22px;background:#d8dae5"></div>
<div style="left:869px;top:299px;width:1px;height:22px;background:#d8dae5"></div>
<div style="left:988px;top:299px;width:1px;height:22px;background:#d8dae5"></div>
<div style="left:1107px;top:299px;width:1px;height:22px;background:#d8dae5"></div>
<div style="left:1181px;top:299px;width:1px;height:22px;background:#d8dae5"></div>
<div style="left:1255px;top:299px;width:1px;height:22px;background:#d8dae5"></div>
<div style="left:1329px;top:299px;width:1px;height:22px;background:#d8dae5"></div>
<div style="left:505px;top:304px;width:11px;height:11px;border:1px solid #9092a0;background:#fff"><div style="left:1px;top:1px;width:7px;height:7px;border:1px solid #d4d6de;background:linear-gradient(#e4e5ea,#f2f3f6)"></div></div>
<div style="left:1347px;top:304px;width:11px;height:11px;border:1px solid #9092a0;background:#fff"><div style="left:1px;top:1px;width:7px;height:7px;border:1px solid #d4d6de;background:linear-gradient(#e4e5ea,#f2f3f6)"></div><svg style="left:1px;top:1px" width="9" height="9" viewBox="0 0 9 9"><path d="M1.6 4.500l2.100 2.500 4.100-4.900" fill="none" stroke="#151515" stroke-width="2"/></svg></div>
<div style="left:19px;top:344px;width:1354px;height:1px;background:#d8dae5"></div>
<div style="left:0px;top:322px;width:19px;height:22px;background:#dedfe7;border:1px solid #ebecf2;border-bottom:none;box-sizing:border-box"></div>
<div style="left:0px;top:344px;width:19px;height:1px;background:#a3a4ae"></div>
<div style="left:19px;top:322px;width:1px;height:22px;background:#d8dae5"></div>
<div style="left:118px;top:322px;width:1px;height:22px;background:#d8dae5"></div>
<div style="left:217px;top:322px;width:1px;height:22px;background:#d8dae5"></div>
<div style="left:296px;top:322px;width:1px;height:22px;background:#d8dae5"></div>
<div style="left:375px;top:322px;width:1px;height:22px;background:#d8dae5"></div>
<div style="left:474px;top:322px;width:1px;height:22px;background:#d8dae5"></div>
<div style="left:548px;top:322px;width:1px;height:22px;background:#d8dae5"></div>
<div style="left:647px;top:322px;width:1px;height:22px;background:#d8dae5"></div>
<div style="left:721px;top:322px;width:1px;height:22px;background:#d8dae5"></div>
<div style="left:795px;top:322px;width:1px;height:22px;background:#d8dae5"></div>
<div style="left:869px;top:322px;width:1px;height:22px;background:#d8dae5"></div>
<div style="left:988px;top:322px;width:1px;height:22px;background:#d8dae5"></div>
<div style="left:1107px;top:322px;width:1px;height:22px;background:#d8dae5"></div>
<div style="left:1181px;top:322px;width:1px;height:22px;background:#d8dae5"></div>
<div style="left:1255px;top:322px;width:1px;height:22px;background:#d8dae5"></div>
<div style="left:1329px;top:322px;width:1px;height:22px;background:#d8dae5"></div>
<div style="left:505px;top:327px;width:11px;height:11px;border:1px solid #9092a0;background:#fff"><div style="left:1px;top:1px;width:7px;height:7px;border:1px solid #d4d6de;background:linear-gradient(#e4e5ea,#f2f3f6)"></div></div>
<div style="left:1347px;top:327px;width:11px;height:11px;border:1px solid #9092a0;background:#fff"><div style="left:1px;top:1px;width:7px;height:7px;border:1px solid #d4d6de;background:linear-gradient(#e4e5ea,#f2f3f6)"></div><svg style="left:1px;top:1px" width="9" height="9" viewBox="0 0 9 9"><path d="M1.6 4.500l2.100 2.500 4.100-4.900" fill="none" stroke="#151515" stroke-width="2"/></svg></div>
<div style="left:375px;top:0px;width:100px;height:23px;border:2px solid #ff7f0a;border-top-width:1px;box-sizing:border-box;background:#fff"></div>
<div style="left:378px;top:2px;width:94px;height:18px;background:#ffe8a8"></div>
</div>
<div style="left:1376px;top:52px;width:17px;height:393px;background:linear-gradient(90deg,#e9e9f0,#f3f3f7 60%,#f8f8fb)"></div>
<div style="left:1376px;top:51px;width:17px;height:17px;border:1px solid #c8c8d3;border-radius:3px;box-sizing:border-box;background:linear-gradient(#fefefe,#f3f3f6 55%,#e9e9ee);box-shadow:inset 0 0 0 1px rgba(255,255,255,.8)"></div>
<div style="left:1376px;top:428px;width:17px;height:17px;border:1px solid #c8c8d3;border-radius:3px;box-sizing:border-box;background:linear-gradient(#fefefe,#f3f3f6 55%,#e9e9ee);box-shadow:inset 0 0 0 1px rgba(255,255,255,.8)"></div>
<div style="left:1376px;top:68px;width:17px;height:15px;border:1px solid #c8c8d3;border-radius:3px;box-sizing:border-box;background:linear-gradient(#fefefe,#f3f3f6 55%,#e9e9ee);box-shadow:inset 0 0 0 1px rgba(255,255,255,.8)"></div>
<div style="left:1381px;top:72px;width:7px;height:1px;background:#8a8a96"></div>
<div style="left:1381px;top:74px;width:7px;height:1px;background:#8a8a96"></div>
<div style="left:1381px;top:76px;width:7px;height:1px;background:#8a8a96"></div>
<div style="left:1381px;top:78px;width:7px;height:1px;background:#8a8a96"></div>
<svg style="left:1380px;top:56px" width="9" height="6" viewBox="0 0 9 6"><path d="M0.8 5L4.500 1 8.200 5z" fill="#74748c"/></svg>
<svg style="left:1380px;top:434px" width="9" height="6" viewBox="0 0 9 6"><path d="M0.8 1L4.500 5 8.200 1z" fill="#74748c"/></svg>
<div style="left:3px;top:445px;width:1373px;height:17px;background:linear-gradient(#efeff3,#f7f7f9 50%,#fbfbfc)"></div>
<div style="left:3px;top:445px;width:17px;height:17px;border:1px solid #c8c8d3;border-radius:3px;box-sizing:border-box;background:linear-gradient(#fefefe,#f3f3f6 55%,#e9e9ee);box-shadow:inset 0 0 0 1px rgba(255,255,255,.8)"></div>
<div style="left:1359px;top:445px;width:17px;height:17px;border:1px solid #c8c8d3;border-radius:3px;box-sizing:border-box;background:linear-gradient(#fefefe,#f3f3f6 55%,#e9e9ee);box-shadow:inset 0 0 0 1px rgba(255,255,255,.8)"></div>
<div style="left:21px;top:445px;width:1332px;height:17px;border:1px solid #bcbdc9;border-radius:3px;box-sizing:border-box;background:linear-gradient(#fbfbfb,#f3f4f4 50%,#e9e9ee);box-shadow:inset 0 0 0 1px rgba(255,255,255,.7)"></div>
<svg style="left:8px;top:449px" width="6" height="9" viewBox="0 0 6 9"><path d="M5 1L1 4.500 5 8z" fill="#74748c"/></svg>
<svg style="left:1365px;top:449px" width="6" height="9" viewBox="0 0 6 9"><path d="M1 1L5 4.500 1 8z" fill="#74748c"/></svg>
<div style="left:683px;top:450px;width:1px;height:7px;background:#70707c"></div>
<div style="left:685px;top:450px;width:1px;height:7px;background:#70707c"></div>
<div style="left:687px;top:450px;width:1px;height:7px;background:#70707c"></div>
<div style="left:689px;top:450px;width:1px;height:7px;background:#70707c"></div>
<div style="left:1376px;top:445px;width:17px;height:17px;background:#fff"></div>
<div style="left:3px;top:462px;width:1390px;height:2px;background:#a3a3ad"></div>
<div style="left:3px;top:464px;width:1390px;height:27px;background:#f0f0f0"></div>
<div style="left:3px;top:491px;width:1390px;height:1px;background:#a9a9b3"></div>
<div style="left:3px;top:492px;width:1390px;height:3px;background:#f6f6f9"></div>
<div style="left:135px;top:466px;width:231px;height:20px;border:1px solid #a5a6b2;border-radius:2px;box-sizing:border-box;background:#fff"></div>
<div style="left:536px;top:466px;width:231px;height:20px;border:1px solid #a5a6b2;border-radius:2px;box-sizing:border-box;background:#fff"></div>
<div style="left:3px;top:495px;width:1082px;height:1px;background:#a3a4ae"></div>
<div style="left:1084px;top:495px;width:1px;height:191px;background:#a3a4ae"></div>
<div style="left:3px;top:496px;width:1081px;height:28px;background:linear-gradient(#d4d7e3,#d7dae5 50%,#dee0ea)"></div>
<div style="left:3px;top:524px;width:1081px;height:1px;background:#9fa1ad"></div>
<div style="left:3px;top:525px;width:1081px;height:143px;background:#fff"></div>
<div style="left:22px;top:497px;width:1px;height:26px;background:#a7a9b4"></div>
<div style="left:23px;top:497px;width:1px;height:26px;background:#e6e8f0"></div>
<div style="left:321px;top:497px;width:1px;height:26px;background:#a7a9b4"></div>
<div style="left:322px;top:497px;width:1px;height:26px;background:#e6e8f0"></div>
<div style="left:440px;top:497px;width:1px;height:26px;background:#a7a9b4"></div>
<div style="left:441px;top:497px;width:1px;height:26px;background:#e6e8f0"></div>
<div style="left:559px;top:497px;width:1px;height:26px;background:#a7a9b4"></div>
<div style="left:560px;top:497px;width:1px;height:26px;background:#e6e8f0"></div>
<div style="left:613px;top:497px;width:1px;height:26px;background:#a7a9b4"></div>
<div style="left:614px;top:497px;width:1px;height:26px;background:#e6e8f0"></div>
<div style="left:662px;top:497px;width:1px;height:26px;background:#a7a9b4"></div>
<div style="left:663px;top:497px;width:1px;height:26px;background:#e6e8f0"></div>
<div style="left:736px;top:497px;width:1px;height:26px;background:#a7a9b4"></div>
<div style="left:737px;top:497px;width:1px;height:26px;background:#e6e8f0"></div>
<div style="left:810px;top:497px;width:1px;height:26px;background:#a7a9b4"></div>
<div style="left:811px;top:497px;width:1px;height:26px;background:#e6e8f0"></div>
<div style="left:884px;top:497px;width:1px;height:26px;background:#a7a9b4"></div>
<div style="left:885px;top:497px;width:1px;height:26px;background:#e6e8f0"></div>
<div style="left:958px;top:497px;width:1px;height:26px;background:#a7a9b4"></div>
<div style="left:959px;top:497px;width:1px;height:26px;background:#e6e8f0"></div>
<div style="left:1032px;top:497px;width:1px;height:26px;background:#a7a9b4"></div>
<div style="left:1033px;top:497px;width:1px;height:26px;background:#e6e8f0"></div>
<div style="left:3px;top:496px;width:1081px;height:172px;overflow:hidden" id="g2">
</div>
<div style="left:22px;top:525px;width:1062px;height:22px;background:linear-gradient(#fff0c6,#ffe9ad 18%,#ffe7a4 60%,#ffe59e)"></div>
<div style="left:3px;top:547px;width:1081px;height:1px;background:#ff8a0e"></div>
<div style="left:3px;top:525px;width:19px;height:22px;background:linear-gradient(#f9d465,#f2b93c 45%,#f0b134 55%,#f9dc86);border-left:1px solid #f09a1c;box-sizing:border-box"></div>
<svg style="left:8px;top:530px" width="9" height="12" viewBox="0 0 9 12"><path d="M1.3 1.2L7.300 6 1.3 10.800z" fill="#f6f6fb" stroke="#3b3b6b" stroke-width="1.05" stroke-linejoin="round"/></svg>
<div style="left:22px;top:525px;width:1px;height:22px;background:#e3dcc8"></div>
<div style="left:321px;top:525px;width:1px;height:22px;background:#e3dcc8"></div>
<div style="left:440px;top:525px;width:1px;height:22px;background:#e3dcc8"></div>
<div style="left:559px;top:525px;width:1px;height:22px;background:#e3dcc8"></div>
<div style="left:613px;top:525px;width:1px;height:22px;background:#e3dcc8"></div>
<div style="left:662px;top:525px;width:1px;height:22px;background:#e3dcc8"></div>
<div style="left:736px;top:525px;width:1px;height:22px;background:#e3dcc8"></div>
<div style="left:810px;top:525px;width:1px;height:22px;background:#e3dcc8"></div>
<div style="left:884px;top:525px;width:1px;height:22px;background:#e3dcc8"></div>
<div style="left:958px;top:525px;width:1px;height:22px;background:#e3dcc8"></div>
<div style="left:1032px;top:525px;width:1px;height:22px;background:#e3dcc8"></div>
<div style="left:22px;top:570px;width:1062px;height:1px;background:#d8dae5"></div>
<div style="left:3px;top:548px;width:19px;height:22px;background:#dedfe7;border:1px solid #ebecf2;border-bottom:none;box-sizing:border-box"></div>
<div style="left:3px;top:570px;width:19px;height:1px;background:#a3a4ae"></div>
<div style="left:22px;top:548px;width:1px;height:22px;background:#d8dae5"></div>
<div style="left:321px;top:548px;width:1px;height:22px;background:#d8dae5"></div>
<div style="left:440px;top:548px;width:1px;height:22px;background:#d8dae5"></div>
<div style="left:559px;top:548px;width:1px;height:22px;background:#d8dae5"></div>
<div style="left:613px;top:548px;width:1px;height:22px;background:#d8dae5"></div>
<div style="left:662px;top:548px;width:1px;height:22px;background:#d8dae5"></div>
<div style="left:736px;top:548px;width:1px;height:22px;background:#d8dae5"></div>
<div style="left:810px;top:548px;width:1px;height:22px;background:#d8dae5"></div>
<div style="left:884px;top:548px;width:1px;height:22px;background:#d8dae5"></div>
<div style="left:958px;top:548px;width:1px;height:22px;background:#d8dae5"></div>
<div style="left:1032px;top:548px;width:1px;height:22px;background:#d8dae5"></div>
<div style="left:22px;top:593px;width:1062px;height:1px;background:#d8dae5"></div>
<div style="left:3px;top:571px;width:19px;height:22px;background:#dedfe7;border:1px solid #ebecf2;border-bottom:none;box-sizing:border-box"></div>
<div style="left:3px;top:593px;width:19px;height:1px;background:#a3a4ae"></div>
<div style="left:22px;top:571px;width:1px;height:22px;background:#d8dae5"></div>
<div style="left:321px;top:571px;width:1px;height:22px;background:#d8dae5"></div>
<div style="left:440px;top:571px;width:1px;height:22px;background:#d8dae5"></div>
<div style="left:559px;top:571px;width:1px;height:22px;background:#d8dae5"></div>
<div style="left:613px;top:571px;width:1px;height:22px;background:#d8dae5"></div>
<div style="left:662px;top:571px;width:1px;height:22px;background:#d8dae5"></div>
<div style="left:736px;top:571px;width:1px;height:22px;background:#d8dae5"></div>
<div style="left:810px;top:571px;width:1px;height:22px;background:#d8dae5"></div>
<div style="left:884px;top:571px;width:1px;height:22px;background:#d8dae5"></div>
<div style="left:958px;top:571px;width:1px;height:22px;background:#d8dae5"></div>
<div style="left:1032px;top:571px;width:1px;height:22px;background:#d8dae5"></div>
<div style="left:3px;top:668px;width:1081px;height:17px;background:linear-gradient(#efeff3,#f7f7f9 50%,#fbfbfc)"></div>
<div style="left:3px;top:668px;width:17px;height:17px;border:1px solid #c8c8d3;border-radius:3px;box-sizing:border-box;background:linear-gradient(#fefefe,#f3f3f6 55%,#e9e9ee);box-shadow:inset 0 0 0 1px rgba(255,255,255,.8)"></div>
<div style="left:1067px;top:668px;width:17px;height:17px;border:1px solid #c8c8d3;border-radius:3px;box-sizing:border-box;background:linear-gradient(#fefefe,#f3f3f6 55%,#e9e9ee);box-shadow:inset 0 0 0 1px rgba(255,255,255,.8)"></div>
<div style="left:21px;top:668px;width:850px;height:17px;border:1px solid #bcbdc9;border-radius:3px;box-sizing:border-box;background:linear-gradient(#fbfbfb,#f3f4f4 50%,#e9e9ee);box-shadow:inset 0 0 0 1px rgba(255,255,255,.7)"></div>
<svg style="left:8px;top:672px" width="6" height="9" viewBox="0 0 6 9"><path d="M5 1L1 4.500 5 8z" fill="#74748c"/></svg>
<svg style="left:1073px;top:672px" width="6" height="9" viewBox="0 0 6 9"><path d="M1 1L5 4.500 1 8z" fill="#74748c"/></svg>
<div style="left:442px;top:673px;width:1px;height:7px;background:#70707c"></div>
<div style="left:444px;top:673px;width:1px;height:7px;background:#70707c"></div>
<div style="left:446px;top:673px;width:1px;height:7px;background:#70707c"></div>
<div style="left:448px;top:673px;width:1px;height:7px;background:#70707c"></div>
<div style="left:3px;top:685px;width:1390px;height:2px;background:#a3a3ad"></div>
<div style="left:3px;top:687px;width:1390px;height:59px;background:#f0f0f0"></div>
<div style="left:3px;top:746px;width:1390px;height:2px;background:#a3a3ad"></div>
<div style="left:7px;top:691px;width:52px;height:52px;border:1px solid #a6a7b4;border-radius:3px;box-sizing:border-box;background:linear-gradient(#ffffff,#f4f4f7 50%,#ebecf1);box-shadow:inset 0 0 0 1px #fbfbfd"></div>
<div style="left:65px;top:691px;width:101px;height:23px;border:1px solid #a6a7b4;border-radius:3px;box-sizing:border-box;background:linear-gradient(#ffffff,#f4f4f7 50%,#ebecf1);box-shadow:inset 0 0 0 1px #fbfbfd"></div>
<div style="left:65px;top:720px;width:101px;height:23px;border:1px solid #a6a7b4;border-radius:3px;box-sizing:border-box;background:linear-gradient(#ffffff,#f4f4f7 50%,#ebecf1);box-shadow:inset 0 0 0 1px #fbfbfd"></div>
<div style="left:172px;top:691px;width:52px;height:52px;border:1px solid #a6a7b4;border-radius:3px;box-sizing:border-box;background:linear-gradient(#ffffff,#f4f4f7 50%,#ebecf1);box-shadow:inset 0 0 0 1px #fbfbfd"></div>
<div style="left:765px;top:692px;width:252px;height:24px;border:1px solid #a6a7b4;border-radius:3px;box-sizing:border-box;background:linear-gradient(#ffffff,#f4f4f7 50%,#ebecf1);box-shadow:inset 0 0 0 1px #fbfbfd"></div>
<div style="left:1023px;top:692px;width:104px;height:24px;border:1px solid #a6a7b4;border-radius:3px;box-sizing:border-box;background:linear-gradient(#ffffff,#f4f4f7 50%,#ebecf1);box-shadow:inset 0 0 0 1px #fbfbfd"></div>
<div style="left:1130px;top:692px;width:91px;height:24px;border:1px solid #a6a7b4;border-radius:3px;box-sizing:border-box;background:linear-gradient(#ffffff,#f4f4f7 50%,#ebecf1);box-shadow:inset 0 0 0 1px #fbfbfd"></div>
<div style="left:1227px;top:691px;width:52px;height:52px;border:1px solid #a6a7b4;border-radius:3px;box-sizing:border-box;background:linear-gradient(#ffffff,#f4f4f7 50%,#ebecf1);box-shadow:inset 0 0 0 1px #fbfbfd"></div>
<div style="left:1282px;top:691px;width:52px;height:52px;border:1px solid #a6a7b4;border-radius:3px;box-sizing:border-box;background:linear-gradient(#ffffff,#f4f4f7 50%,#ebecf1);box-shadow:inset 0 0 0 1px #fbfbfd"></div>
<div style="left:1337px;top:691px;width:52px;height:52px;border:1px solid #a6a7b4;border-radius:3px;box-sizing:border-box;background:linear-gradient(#ffffff,#f4f4f7 50%,#ebecf1);box-shadow:inset 0 0 0 1px #fbfbfd"></div>
<div style="left:231px;top:727px;width:11px;height:11px;border:1px solid #94959f;background:#fff"><div style="left:1px;top:1px;width:7px;height:7px;border:1px solid #d4d6de;background:linear-gradient(#e4e5ea,#f2f3f6)"></div><svg style="left:1px;top:1px" width="9" height="9" viewBox="0 0 9 9"><path d="M1.6 4.500l2.100 2.500 4.100-4.900" fill="none" stroke="#151515" stroke-width="2"/></svg></div>
<div style="left:1024px;top:725px;width:11px;height:11px;border:1px solid #94959f;background:#fff"><div style="left:1px;top:1px;width:7px;height:7px;border:1px solid #d4d6de;background:linear-gradient(#e4e5ea,#f2f3f6)"></div></div>
<svg style="left:7px;top:691px" width="52" height="52" viewBox="7 691 52 52">
<defs><path id="arw" d="M15.6 701.2C22 693.5 35 693 43.8 702.3L47.9 697.2 50.3 714 31.1 716.7 35.3 710.6C30 703.5 23 700.3 15.6 701.2z"/></defs>
<use href="#arw" fill="#39322f"/><use href="#arw" fill="#39322f" transform="rotate(180 31.9 718.4)"/></svg>
<svg style="left:172px;top:691px" width="52" height="52" viewBox="172 691 52 52">
<path d="M190.4 711v-3.6a2 2 0 0 1 2-2h13.400a2 2 0 0 1 2 2v19.2a2 2 0 0 1 -2 2h-13.4a2 2 0 0 1 -2 -2v-3.600" fill="none" stroke="#333" stroke-width="2.2"/>
<path d="M186 714h7.200v-4.600l8.400 7.600-8.400 7.600v-4.600h-7.200z" fill="#333"/></svg>
<svg style="left:1227px;top:691px" width="52" height="52" viewBox="1227 691 52 52">
<rect x="1242" y="704.3" width="10" height="25.700" fill="#333"/><rect x="1245.200" y="707" width="3.600" height="10" fill="#fff"/><circle cx="1247" cy="725" r="2.300" fill="none" stroke="#fff" stroke-width="1.1"/>
<g transform="rotate(-5.500 1258.500 717)"><rect x="1253.500" y="704.3" width="10" height="25.500" fill="#333"/><rect x="1256.700" y="707" width="3.600" height="10" fill="#fff"/><circle cx="1258.500" cy="725" r="2.300" fill="none" stroke="#fff" stroke-width="1.1"/></g></svg>
<svg style="left:1282px;top:691px" width="52" height="52" viewBox="1282 691 52 52"><path d="M1299.2 707.600a2.500 2.500 0 0 1 2.500 -2.500h9l6.400 6.200v14.900a2.500 2.500 0 0 1 -2.500 2.500h-12.900a2.500 2.500 0 0 1 -2.500 -2.500z" fill="none" stroke="#2c2c2c" stroke-width="2.200" stroke-linejoin="round"/><path d="M1310.5 704.800l6.700 6.600h-6.700z" fill="#2c2c2c"/>
<path d="M1302.500 724.500c3-2.500 5-6 5.200-11 .1-1.200-1-1.300-1-.1.100 3.500 2 7 6.500 8.200 1.200.3 1.200-.9 0-.9-3.500 0-7.500 1.300-10.700 3.800z" fill="none" stroke="#2c2c2c" stroke-width="1.300" stroke-linejoin="round"/></svg>
<svg style="left:1337px;top:691px" width="52" height="52" viewBox="1337 691 52 52"><path d="M1354.2 707.600a2.500 2.500 0 0 1 2.500 -2.500h9l6.400 6.200v14.900a2.500 2.500 0 0 1 -2.500 2.500h-12.900a2.500 2.500 0 0 1 -2.500 -2.500z" fill="none" stroke="#2c2c2c" stroke-width="2.200" stroke-linejoin="round"/><path d="M1365.5 704.800l6.700 6.600h-6.700z" fill="#2c2c2c"/>
<path d="M1358.800 715.500l8.200 9M1367 715.500l-8.200 9" stroke="#2c2c2c" stroke-width="1.600" fill="none"/></svg>
<div style="left:3px;top:748px;width:1390px;height:1px;background:#fdfdfe"></div>
<div style="left:3px;top:749px;width:1px;height:21px;background:#fdfdfe"></div>
<div style="left:1391px;top:749px;width:2px;height:21px;background:#fdfdfe"></div>
<div style="left:4px;top:749px;width:1387px;height:21px;background:linear-gradient(#e9ebf1,#dcdfe7)"></div>
<div style="left:3px;top:770px;width:1390px;height:2px;background:#fdfdfe"></div>
<div style="left:1px;top:772px;width:1394px;height:2px;background:#a2a2ac"></div>
<div style="left:0px;top:774px;width:1398px;height:2px;background:#f8f8fa"></div>
<div style="left:1387px;top:758px;width:2px;height:2px;background:#b9bcc8"></div>
<div style="left:1388px;top:759px;width:1px;height:1px;background:#fff"></div>
<div style="left:1383px;top:762px;width:2px;height:2px;background:#b9bcc8"></div>
<div style="left:1384px;top:763px;width:1px;height:1px;background:#fff"></div>
<div style="left:1387px;top:762px;width:2px;height:2px;background:#b9bcc8"></div>
<div style="left:1388px;top:763px;width:1px;height:1px;background:#fff"></div>
<div style="left:1379px;top:766px;width:2px;height:2px;background:#b9bcc8"></div>
<div style="left:1380px;top:767px;width:1px;height:1px;background:#fff"></div>
<div style="left:1383px;top:766px;width:2px;height:2px;background:#b9bcc8"></div>
<div style="left:1384px;top:767px;width:1px;height:1px;background:#fff"></div>
<div style="left:1387px;top:766px;width:2px;height:2px;background:#b9bcc8"></div>
<div style="left:1388px;top:767px;width:1px;height:1px;background:#fff"></div>
<span style="left:7px;top:1px;width:200px;height:28px;line-height:28px;text-align:left;font-size:11px;transform:scaleX(1.0057);transform-origin:0 50%;">Operasyonel Durum</span>
<span style="left:3px;top:31px;width:1392px;height:20px;line-height:20px;text-align:center;font-size:11.5px;color:#2b2b35;transform:scaleX(0.9655);transform-origin:50% 50%;">Gruplamak için Bir Kolon Sürükleyip Bırakınız</span>
<span style="left:23px;top:52px;width:98px;height:28px;line-height:28px;text-align:center;font-size:11px;color:#0a0a0a;transform:scaleX(0.9293);transform-origin:50% 50%;">MÜŞTERİ</span>
<span style="left:25px;top:81px;width:60px;height:25px;line-height:25px;text-align:left;font-size:11.5px;color:#aca6b4;transform:scaleX(0.9956);transform-origin:0 50%;">içerir:</span>
<span style="left:122px;top:52px;width:98px;height:28px;line-height:28px;text-align:center;font-size:11px;color:#0a0a0a;transform:scaleX(0.9246);transform-origin:50% 50%;">SİP. NO</span>
<span style="left:124px;top:81px;width:60px;height:25px;line-height:25px;text-align:left;font-size:11.5px;color:#aca6b4;transform:scaleX(0.9956);transform-origin:0 50%;">içerir:</span>
<span style="left:221px;top:52px;width:78px;height:28px;line-height:28px;text-align:center;font-size:11px;color:#0a0a0a;transform:scaleX(0.9356);transform-origin:50% 50%;">MÜŞT.SİP.</span>
<span style="left:223px;top:81px;width:60px;height:25px;line-height:25px;text-align:left;font-size:11.5px;color:#aca6b4;transform:scaleX(0.9956);transform-origin:0 50%;">içerir:</span>
<span style="left:300px;top:52px;width:78px;height:28px;line-height:28px;text-align:center;font-size:11px;color:#0a0a0a;transform:scaleX(0.9457);transform-origin:50% 50%;">MODEL</span>
<span style="left:302px;top:81px;width:60px;height:25px;line-height:25px;text-align:left;font-size:11.5px;color:#aca6b4;transform:scaleX(0.9956);transform-origin:0 50%;">içerir:</span>
<span style="left:379px;top:52px;width:98px;height:28px;line-height:28px;text-align:center;font-size:11px;color:#0a0a0a;transform:scaleX(0.8908);transform-origin:50% 50%;">İLK YÜK.TAR</span>
<span style="left:381px;top:81px;width:60px;height:25px;line-height:25px;text-align:left;font-size:11.5px;color:#aca6b4;transform:scaleX(1.0433);transform-origin:0 50%;">eşittir:</span>
<span style="left:478px;top:52px;width:73px;height:28px;line-height:28px;text-align:center;font-size:11px;color:#0a0a0a;transform:scaleX(0.8839);transform-origin:50% 50%;">KES.ONAY</span>
<span style="left:552px;top:52px;width:98px;height:28px;line-height:28px;text-align:center;font-size:11px;color:#0a0a0a;transform:scaleX(0.8978);transform-origin:50% 50%;">KES.ONAY.TAR.</span>
<span style="left:554px;top:81px;width:60px;height:25px;line-height:25px;text-align:left;font-size:11.5px;color:#aca6b4;transform:scaleX(1.0433);transform-origin:0 50%;">eşittir:</span>
<span style="left:651px;top:52px;width:73px;height:28px;line-height:28px;text-align:center;font-size:11px;color:#0a0a0a;transform:scaleX(0.9031);transform-origin:50% 50%;">SİP.ADET</span>
<span style="left:653px;top:81px;width:60px;height:25px;line-height:25px;text-align:left;font-size:11.5px;color:#aca6b4;transform:scaleX(1.0433);transform-origin:0 50%;">eşittir:</span>
<span style="left:725px;top:52px;width:73px;height:28px;line-height:28px;text-align:center;font-size:11px;color:#0a0a0a;transform:scaleX(0.8608);transform-origin:50% 50%;">KESİLEN</span>
<span style="left:727px;top:81px;width:60px;height:25px;line-height:25px;text-align:left;font-size:11.5px;color:#aca6b4;transform:scaleX(1.0433);transform-origin:0 50%;">eşittir:</span>
<span style="left:799px;top:52px;width:73px;height:28px;line-height:28px;text-align:center;font-size:11px;color:#0a0a0a;transform:scaleX(0.8393);transform-origin:50% 50%;">KES.LOT</span>
<span style="left:801px;top:81px;width:60px;height:25px;line-height:25px;text-align:left;font-size:11.5px;color:#aca6b4;transform:scaleX(1.0433);transform-origin:0 50%;">eşittir:</span>
<span style="left:873px;top:52px;width:118px;height:28px;line-height:28px;text-align:center;font-size:11px;color:#0a0a0a;transform:scaleX(0.8897);transform-origin:50% 50%;">OPERASYON</span>
<span style="left:875px;top:81px;width:60px;height:25px;line-height:25px;text-align:left;font-size:11.5px;color:#aca6b4;transform:scaleX(0.9956);transform-origin:0 50%;">içerir:</span>
<span style="left:992px;top:52px;width:118px;height:28px;line-height:28px;text-align:center;font-size:11px;color:#0a0a0a;transform:scaleX(0.8982);transform-origin:50% 50%;">İŞ MERKEZİ</span>
<span style="left:994px;top:81px;width:60px;height:25px;line-height:25px;text-align:left;font-size:11.5px;color:#aca6b4;transform:scaleX(0.9956);transform-origin:0 50%;">içerir:</span>
<span style="left:1111px;top:52px;width:73px;height:28px;line-height:28px;text-align:center;font-size:11px;color:#0a0a0a;transform:scaleX(0.9471);transform-origin:50% 50%;">GİDEN</span>
<span style="left:1113px;top:81px;width:60px;height:25px;line-height:25px;text-align:left;font-size:11.5px;color:#aca6b4;transform:scaleX(1.0433);transform-origin:0 50%;">eşittir:</span>
<span style="left:1185px;top:52px;width:73px;height:28px;line-height:28px;text-align:center;font-size:11px;color:#0a0a0a;transform:scaleX(0.8848);transform-origin:50% 50%;">GELEN</span>
<span style="left:1187px;top:81px;width:60px;height:25px;line-height:25px;text-align:left;font-size:11.5px;color:#aca6b4;transform:scaleX(1.0433);transform-origin:0 50%;">eşittir:</span>
<span style="left:1259px;top:52px;width:73px;height:28px;line-height:28px;text-align:center;font-size:11px;color:#0a0a0a;transform:scaleX(0.9147);transform-origin:50% 50%;">KALAN</span>
<span style="left:1261px;top:81px;width:60px;height:25px;line-height:25px;text-align:left;font-size:11.5px;color:#aca6b4;transform:scaleX(1.0433);transform-origin:0 50%;">eşittir:</span>
<span style="left:1333px;top:52px;width:49px;height:28px;line-height:28px;text-align:center;font-size:11px;color:#0a0a0a;transform:scaleX(0.8398);transform-origin:50% 50%;">SEC</span>
<span style="left:23px;top:107px;width:98px;height:22px;line-height:22px;text-align:center;transform:scaleX(0.9723);transform-origin:50% 50%;">NAUTICA JEANS</span>
<span style="left:122px;top:107px;width:98px;height:22px;line-height:22px;text-align:center;transform:scaleX(0.9893);transform-origin:50% 50%;">IL014.1006</span>
<span style="left:221px;top:107px;width:78px;height:22px;line-height:22px;text-align:center;transform:scaleX(0.9853);transform-origin:50% 50%;">K51920T</span>
<span style="left:300px;top:107px;width:78px;height:22px;line-height:22px;text-align:center;transform:scaleX(0.9853);transform-origin:50% 50%;">K51920T</span>
<span style="left:385px;top:107px;width:92px;height:22px;line-height:22px;text-align:left;transform:scaleX(0.9865);transform-origin:0 50%;word-spacing:0.710px;">28 Ocak 2015 Ç...</span>
<span style="left:651px;top:107px;width:73px;height:22px;line-height:22px;text-align:center;transform:scaleX(1.0267);transform-origin:50% 50%;">853</span>
<span style="left:725px;top:107px;width:73px;height:22px;line-height:22px;text-align:center;transform:scaleX(1.0267);transform-origin:50% 50%;">798</span>
<span style="left:799px;top:107px;width:73px;height:22px;line-height:22px;text-align:center;transform:scaleX(1.0267);transform-origin:50% 50%;">0</span>
<span style="left:873px;top:107px;width:118px;height:22px;line-height:22px;text-align:center;transform:scaleX(0.9519);transform-origin:50% 50%;">NAKIŞ</span>
<span style="left:992px;top:107px;width:118px;height:22px;line-height:22px;text-align:center;transform:scaleX(0.9502);transform-origin:50% 50%;word-spacing:1.316px;">KARACA NAKIŞ TEKT...</span>
<span style="left:1111px;top:107px;width:73px;height:22px;line-height:22px;text-align:center;transform:scaleX(1.0267);transform-origin:50% 50%;">827</span>
<span style="left:1185px;top:107px;width:73px;height:22px;line-height:22px;text-align:center;transform:scaleX(1.0267);transform-origin:50% 50%;">827</span>
<span style="left:1259px;top:107px;width:73px;height:22px;line-height:22px;text-align:center;transform:scaleX(1.0267);transform-origin:50% 50%;">0</span>
<span style="left:23px;top:130px;width:98px;height:22px;line-height:22px;text-align:center;transform:scaleX(0.9723);transform-origin:50% 50%;">NAUTICA JEANS</span>
<span style="left:122px;top:130px;width:98px;height:22px;line-height:22px;text-align:center;transform:scaleX(0.9893);transform-origin:50% 50%;">IL014.1006</span>
<span style="left:221px;top:130px;width:78px;height:22px;line-height:22px;text-align:center;transform:scaleX(0.9853);transform-origin:50% 50%;">K51920T</span>
<span style="left:300px;top:130px;width:78px;height:22px;line-height:22px;text-align:center;transform:scaleX(0.9853);transform-origin:50% 50%;">K51920T</span>
<span style="left:382px;top:130px;width:95px;height:22px;line-height:22px;text-align:left;transform:scaleX(0.9891);transform-origin:0 50%;word-spacing:0.708px;">28 Ocak 2015 Ça...</span>
<span style="left:651px;top:130px;width:73px;height:22px;line-height:22px;text-align:center;transform:scaleX(1.0267);transform-origin:50% 50%;">853</span>
<span style="left:725px;top:130px;width:73px;height:22px;line-height:22px;text-align:center;transform:scaleX(1.0267);transform-origin:50% 50%;">798</span>
<span style="left:799px;top:130px;width:73px;height:22px;line-height:22px;text-align:center;transform:scaleX(1.0267);transform-origin:50% 50%;">0</span>
<span style="left:873px;top:130px;width:118px;height:22px;line-height:22px;text-align:center;transform:scaleX(0.9887);transform-origin:50% 50%;">İLİK DÜĞME</span>
<span style="left:992px;top:130px;width:118px;height:22px;line-height:22px;text-align:center;transform:scaleX(0.9664);transform-origin:50% 50%;word-spacing:1.035px;">YILDIZ İLİK DÜĞME...</span>
<span style="left:1111px;top:130px;width:73px;height:22px;line-height:22px;text-align:center;transform:scaleX(1.0267);transform-origin:50% 50%;">795</span>
<span style="left:1185px;top:130px;width:73px;height:22px;line-height:22px;text-align:center;transform:scaleX(1.0267);transform-origin:50% 50%;">795</span>
<span style="left:1259px;top:130px;width:73px;height:22px;line-height:22px;text-align:center;transform:scaleX(1.0267);transform-origin:50% 50%;">0</span>
<span style="left:23px;top:153px;width:98px;height:22px;line-height:22px;text-align:center;transform:scaleX(0.9723);transform-origin:50% 50%;">NAUTICA JEANS</span>
<span style="left:122px;top:153px;width:98px;height:22px;line-height:22px;text-align:center;transform:scaleX(0.9893);transform-origin:50% 50%;">IL014.1006</span>
<span style="left:221px;top:153px;width:78px;height:22px;line-height:22px;text-align:center;transform:scaleX(0.9853);transform-origin:50% 50%;">K51920T</span>
<span style="left:300px;top:153px;width:78px;height:22px;line-height:22px;text-align:center;transform:scaleX(0.9853);transform-origin:50% 50%;">K51920T</span>
<span style="left:382px;top:153px;width:95px;height:22px;line-height:22px;text-align:left;transform:scaleX(0.9891);transform-origin:0 50%;word-spacing:0.708px;">28 Ocak 2015 Ça...</span>
<span style="left:651px;top:153px;width:73px;height:22px;line-height:22px;text-align:center;transform:scaleX(1.0267);transform-origin:50% 50%;">853</span>
<span style="left:725px;top:153px;width:73px;height:22px;line-height:22px;text-align:center;transform:scaleX(1.0267);transform-origin:50% 50%;">798</span>
<span style="left:799px;top:153px;width:73px;height:22px;line-height:22px;text-align:center;transform:scaleX(1.0267);transform-origin:50% 50%;">0</span>
<span style="left:873px;top:153px;width:118px;height:22px;line-height:22px;text-align:center;transform:scaleX(1.0284);transform-origin:50% 50%;">DİKİM</span>
<span style="left:992px;top:153px;width:118px;height:22px;line-height:22px;text-align:center;transform:scaleX(0.9326);transform-origin:50% 50%;word-spacing:0.804px;">UIT TEKSTİL PAZ.SA...</span>
<span style="left:1111px;top:153px;width:73px;height:22px;line-height:22px;text-align:center;transform:scaleX(1.0267);transform-origin:50% 50%;">798</span>
<span style="left:1185px;top:153px;width:73px;height:22px;line-height:22px;text-align:center;transform:scaleX(1.0267);transform-origin:50% 50%;">794</span>
<span style="left:1259px;top:153px;width:73px;height:22px;line-height:22px;text-align:center;transform:scaleX(1.0267);transform-origin:50% 50%;">4</span>
<span style="left:23px;top:176px;width:98px;height:22px;line-height:22px;text-align:center;transform:scaleX(0.9723);transform-origin:50% 50%;">NAUTICA JEANS</span>
<span style="left:122px;top:176px;width:98px;height:22px;line-height:22px;text-align:center;transform:scaleX(0.9893);transform-origin:50% 50%;">IL014.1006</span>
<span style="left:221px;top:176px;width:78px;height:22px;line-height:22px;text-align:center;transform:scaleX(0.9853);transform-origin:50% 50%;">K51920T</span>
<span style="left:300px;top:176px;width:78px;height:22px;line-height:22px;text-align:center;transform:scaleX(0.9853);transform-origin:50% 50%;">K51920T</span>
<span style="left:382px;top:176px;width:95px;height:22px;line-height:22px;text-align:left;transform:scaleX(0.9891);transform-origin:0 50%;word-spacing:0.708px;">28 Ocak 2015 Ça...</span>
<span style="left:651px;top:176px;width:73px;height:22px;line-height:22px;text-align:center;transform:scaleX(1.0267);transform-origin:50% 50%;">853</span>
<span style="left:725px;top:176px;width:73px;height:22px;line-height:22px;text-align:center;transform:scaleX(1.0267);transform-origin:50% 50%;">798</span>
<span style="left:799px;top:176px;width:73px;height:22px;line-height:22px;text-align:center;transform:scaleX(1.0267);transform-origin:50% 50%;">0</span>
<span style="left:873px;top:176px;width:118px;height:22px;line-height:22px;text-align:center;transform:scaleX(0.9629);transform-origin:50% 50%;">ÜTÜ PAKET</span>
<span style="left:992px;top:176px;width:118px;height:22px;line-height:22px;text-align:center;transform:scaleX(0.9436);transform-origin:50% 50%;">ATA TEKSTİL ERDOĞ...</span>
<span style="left:1111px;top:176px;width:73px;height:22px;line-height:22px;text-align:center;transform:scaleX(1.0267);transform-origin:50% 50%;">684</span>
<span style="left:1185px;top:176px;width:73px;height:22px;line-height:22px;text-align:center;transform:scaleX(1.0267);transform-origin:50% 50%;">0</span>
<span style="left:1259px;top:176px;width:73px;height:22px;line-height:22px;text-align:center;transform:scaleX(1.0267);transform-origin:50% 50%;">684</span>
<span style="left:23px;top:199px;width:98px;height:22px;line-height:22px;text-align:center;transform:scaleX(0.9723);transform-origin:50% 50%;">NAUTICA JEANS</span>
<span style="left:122px;top:199px;width:98px;height:22px;line-height:22px;text-align:center;transform:scaleX(0.9893);transform-origin:50% 50%;">IL014.1006</span>
<span style="left:221px;top:199px;width:78px;height:22px;line-height:22px;text-align:center;transform:scaleX(0.9853);transform-origin:50% 50%;">K51920T</span>
<span style="left:300px;top:199px;width:78px;height:22px;line-height:22px;text-align:center;transform:scaleX(0.9853);transform-origin:50% 50%;">K51920T</span>
<span style="left:382px;top:199px;width:95px;height:22px;line-height:22px;text-align:left;transform:scaleX(0.9891);transform-origin:0 50%;word-spacing:0.708px;">28 Ocak 2015 Ça...</span>
<span style="left:651px;top:199px;width:73px;height:22px;line-height:22px;text-align:center;transform:scaleX(1.0267);transform-origin:50% 50%;">853</span>
<span style="left:725px;top:199px;width:73px;height:22px;line-height:22px;text-align:center;transform:scaleX(1.0267);transform-origin:50% 50%;">798</span>
<span style="left:799px;top:199px;width:73px;height:22px;line-height:22px;text-align:center;transform:scaleX(1.0267);transform-origin:50% 50%;">0</span>
<span style="left:873px;top:199px;width:118px;height:22px;line-height:22px;text-align:center;transform:scaleX(0.9278);transform-origin:50% 50%;">EL İŞLEME</span>
<span style="left:992px;top:199px;width:118px;height:22px;line-height:22px;text-align:center;transform:scaleX(0.9503);transform-origin:50% 50%;">OKAN KROŞETA</span>
<span style="left:1111px;top:199px;width:73px;height:22px;line-height:22px;text-align:center;transform:scaleX(1.0267);transform-origin:50% 50%;">827</span>
<span style="left:1185px;top:199px;width:73px;height:22px;line-height:22px;text-align:center;transform:scaleX(1.0267);transform-origin:50% 50%;">0</span>
<span style="left:1259px;top:199px;width:73px;height:22px;line-height:22px;text-align:center;transform:scaleX(1.0267);transform-origin:50% 50%;">827</span>
<span style="left:23px;top:222px;width:98px;height:22px;line-height:22px;text-align:center;transform:scaleX(0.9723);transform-origin:50% 50%;">NAUTICA JEANS</span>
<span style="left:122px;top:222px;width:98px;height:22px;line-height:22px;text-align:center;transform:scaleX(0.9893);transform-origin:50% 50%;">IL014.1006</span>
<span style="left:221px;top:222px;width:78px;height:22px;line-height:22px;text-align:center;transform:scaleX(0.9853);transform-origin:50% 50%;">K51920T</span>
<span style="left:300px;top:222px;width:78px;height:22px;line-height:22px;text-align:center;transform:scaleX(0.9853);transform-origin:50% 50%;">K51920T</span>
<span style="left:382px;top:222px;width:95px;height:22px;line-height:22px;text-align:left;transform:scaleX(0.9891);transform-origin:0 50%;word-spacing:0.708px;">28 Ocak 2015 Ça...</span>
<span style="left:651px;top:222px;width:73px;height:22px;line-height:22px;text-align:center;transform:scaleX(1.0267);transform-origin:50% 50%;">853</span>
<span style="left:725px;top:222px;width:73px;height:22px;line-height:22px;text-align:center;transform:scaleX(1.0267);transform-origin:50% 50%;">798</span>
<span style="left:799px;top:222px;width:73px;height:22px;line-height:22px;text-align:center;transform:scaleX(1.0267);transform-origin:50% 50%;">0</span>
<span style="left:873px;top:222px;width:118px;height:22px;line-height:22px;text-align:center;transform:scaleX(0.9547);transform-origin:50% 50%;">YAKA</span>
<span style="left:992px;top:222px;width:118px;height:22px;line-height:22px;text-align:center;transform:scaleX(0.9328);transform-origin:50% 50%;">HAZAL  KONFEKSİYO...</span>
<span style="left:1111px;top:222px;width:73px;height:22px;line-height:22px;text-align:center;transform:scaleX(1.0267);transform-origin:50% 50%;">827</span>
<span style="left:1185px;top:222px;width:73px;height:22px;line-height:22px;text-align:center;transform:scaleX(1.0267);transform-origin:50% 50%;">827</span>
<span style="left:1259px;top:222px;width:73px;height:22px;line-height:22px;text-align:center;transform:scaleX(1.0267);transform-origin:50% 50%;">0</span>
<span style="left:23px;top:245px;width:98px;height:22px;line-height:22px;text-align:center;transform:scaleX(0.9723);transform-origin:50% 50%;">NAUTICA JEANS</span>
<span style="left:122px;top:245px;width:98px;height:22px;line-height:22px;text-align:center;transform:scaleX(0.9893);transform-origin:50% 50%;">IL014.1271</span>
<span style="left:221px;top:245px;width:78px;height:22px;line-height:22px;text-align:center;transform:scaleX(1.0194);transform-origin:50% 50%;">519D003T</span>
<span style="left:300px;top:245px;width:78px;height:22px;line-height:22px;text-align:center;transform:scaleX(1.0194);transform-origin:50% 50%;">519D003T</span>
<span style="left:382px;top:245px;width:95px;height:22px;line-height:22px;text-align:left;transform:scaleX(0.9991);transform-origin:0 50%;word-spacing:0.601px;">13 Şubat 2015 C...</span>
<span style="left:651px;top:245px;width:73px;height:22px;line-height:22px;text-align:center;transform:scaleX(1.0267);transform-origin:50% 50%;">150</span>
<span style="left:725px;top:245px;width:73px;height:22px;line-height:22px;text-align:center;transform:scaleX(1.0267);transform-origin:50% 50%;">167</span>
<span style="left:799px;top:245px;width:73px;height:22px;line-height:22px;text-align:center;transform:scaleX(1.0267);transform-origin:50% 50%;">0</span>
<span style="left:873px;top:245px;width:118px;height:22px;line-height:22px;text-align:center;transform:scaleX(0.9465);transform-origin:50% 50%;">PARÇA BASKI</span>
<span style="left:992px;top:245px;width:118px;height:22px;line-height:22px;text-align:center;transform:scaleX(0.9367);transform-origin:50% 50%;word-spacing:0.801px;">BAŞAK EMPRİME SE...</span>
<span style="left:1111px;top:245px;width:73px;height:22px;line-height:22px;text-align:center;transform:scaleX(1.0267);transform-origin:50% 50%;">167</span>
<span style="left:1185px;top:245px;width:73px;height:22px;line-height:22px;text-align:center;transform:scaleX(1.0267);transform-origin:50% 50%;">167</span>
<span style="left:1259px;top:245px;width:73px;height:22px;line-height:22px;text-align:center;transform:scaleX(1.0267);transform-origin:50% 50%;">0</span>
<span style="left:23px;top:268px;width:98px;height:22px;line-height:22px;text-align:center;transform:scaleX(0.9723);transform-origin:50% 50%;">NAUTICA JEANS</span>
<span style="left:122px;top:268px;width:98px;height:22px;line-height:22px;text-align:center;transform:scaleX(0.9893);transform-origin:50% 50%;">IL014.1271</span>
<span style="left:221px;top:268px;width:78px;height:22px;line-height:22px;text-align:center;transform:scaleX(1.0194);transform-origin:50% 50%;">519D003T</span>
<span style="left:300px;top:268px;width:78px;height:22px;line-height:22px;text-align:center;transform:scaleX(1.0194);transform-origin:50% 50%;">519D003T</span>
<span style="left:382px;top:268px;width:95px;height:22px;line-height:22px;text-align:left;transform:scaleX(0.9991);transform-origin:0 50%;word-spacing:0.601px;">13 Şubat 2015 C...</span>
<span style="left:651px;top:268px;width:73px;height:22px;line-height:22px;text-align:center;transform:scaleX(1.0267);transform-origin:50% 50%;">150</span>
<span style="left:725px;top:268px;width:73px;height:22px;line-height:22px;text-align:center;transform:scaleX(1.0267);transform-origin:50% 50%;">167</span>
<span style="left:799px;top:268px;width:73px;height:22px;line-height:22px;text-align:center;transform:scaleX(1.0267);transform-origin:50% 50%;">0</span>
<span style="left:873px;top:268px;width:118px;height:22px;line-height:22px;text-align:center;transform:scaleX(0.9519);transform-origin:50% 50%;">NAKIŞ</span>
<span style="left:992px;top:268px;width:118px;height:22px;line-height:22px;text-align:center;transform:scaleX(0.9885);transform-origin:50% 50%;word-spacing:1.517px;">İLDA NAKIŞ AYHAN...</span>
<span style="left:1111px;top:268px;width:73px;height:22px;line-height:22px;text-align:center;transform:scaleX(1.0267);transform-origin:50% 50%;">167</span>
<span style="left:1185px;top:268px;width:73px;height:22px;line-height:22px;text-align:center;transform:scaleX(1.0267);transform-origin:50% 50%;">163</span>
<span style="left:1259px;top:268px;width:73px;height:22px;line-height:22px;text-align:center;transform:scaleX(1.0267);transform-origin:50% 50%;">4</span>
<span style="left:23px;top:291px;width:98px;height:22px;line-height:22px;text-align:center;transform:scaleX(0.9723);transform-origin:50% 50%;">NAUTICA JEANS</span>
<span style="left:122px;top:291px;width:98px;height:22px;line-height:22px;text-align:center;transform:scaleX(0.9893);transform-origin:50% 50%;">IL014.1271</span>
<span style="left:221px;top:291px;width:78px;height:22px;line-height:22px;text-align:center;transform:scaleX(1.0194);transform-origin:50% 50%;">519D003T</span>
<span style="left:300px;top:291px;width:78px;height:22px;line-height:22px;text-align:center;transform:scaleX(1.0194);transform-origin:50% 50%;">519D003T</span>
<span style="left:382px;top:291px;width:95px;height:22px;line-height:22px;text-align:left;transform:scaleX(0.9991);transform-origin:0 50%;word-spacing:0.601px;">13 Şubat 2015 C...</span>
<span style="left:651px;top:291px;width:73px;height:22px;line-height:22px;text-align:center;transform:scaleX(1.0267);transform-origin:50% 50%;">150</span>
<span style="left:725px;top:291px;width:73px;height:22px;line-height:22px;text-align:center;transform:scaleX(1.0267);transform-origin:50% 50%;">167</span>
<span style="left:799px;top:291px;width:73px;height:22px;line-height:22px;text-align:center;transform:scaleX(1.0267);transform-origin:50% 50%;">0</span>
<span style="left:873px;top:291px;width:118px;height:22px;line-height:22px;text-align:center;transform:scaleX(0.9887);transform-origin:50% 50%;">İLİK DÜĞME</span>
<span style="left:992px;top:291px;width:118px;height:22px;line-height:22px;text-align:center;transform:scaleX(0.9664);transform-origin:50% 50%;word-spacing:1.035px;">YILDIZ İLİK DÜĞME...</span>
<span style="left:1111px;top:291px;width:73px;height:22px;line-height:22px;text-align:center;transform:scaleX(1.0267);transform-origin:50% 50%;">163</span>
<span style="left:1185px;top:291px;width:73px;height:22px;line-height:22px;text-align:center;transform:scaleX(1.0267);transform-origin:50% 50%;">163</span>
<span style="left:1259px;top:291px;width:73px;height:22px;line-height:22px;text-align:center;transform:scaleX(1.0267);transform-origin:50% 50%;">0</span>
<span style="left:23px;top:314px;width:98px;height:22px;line-height:22px;text-align:center;transform:scaleX(0.9723);transform-origin:50% 50%;">NAUTICA JEANS</span>
<span style="left:122px;top:314px;width:98px;height:22px;line-height:22px;text-align:center;transform:scaleX(0.9893);transform-origin:50% 50%;">IL014.1271</span>
<span style="left:221px;top:314px;width:78px;height:22px;line-height:22px;text-align:center;transform:scaleX(1.0194);transform-origin:50% 50%;">519D003T</span>
<span style="left:300px;top:314px;width:78px;height:22px;line-height:22px;text-align:center;transform:scaleX(1.0194);transform-origin:50% 50%;">519D003T</span>
<span style="left:382px;top:314px;width:95px;height:22px;line-height:22px;text-align:left;transform:scaleX(0.9991);transform-origin:0 50%;word-spacing:0.601px;">13 Şubat 2015 C...</span>
<span style="left:651px;top:314px;width:73px;height:22px;line-height:22px;text-align:center;transform:scaleX(1.0267);transform-origin:50% 50%;">150</span>
<span style="left:725px;top:314px;width:73px;height:22px;line-height:22px;text-align:center;transform:scaleX(1.0267);transform-origin:50% 50%;">167</span>
<span style="left:799px;top:314px;width:73px;height:22px;line-height:22px;text-align:center;transform:scaleX(1.0267);transform-origin:50% 50%;">0</span>
<span style="left:873px;top:314px;width:118px;height:22px;line-height:22px;text-align:center;transform:scaleX(1.0284);transform-origin:50% 50%;">DİKİM</span>
<span style="left:992px;top:314px;width:118px;height:22px;line-height:22px;text-align:center;transform:scaleX(0.9326);transform-origin:50% 50%;word-spacing:0.804px;">UIT TEKSTİL PAZ.SA...</span>
<span style="left:1111px;top:314px;width:73px;height:22px;line-height:22px;text-align:center;transform:scaleX(1.0267);transform-origin:50% 50%;">163</span>
<span style="left:1185px;top:314px;width:73px;height:22px;line-height:22px;text-align:center;transform:scaleX(1.0267);transform-origin:50% 50%;">163</span>
<span style="left:1259px;top:314px;width:73px;height:22px;line-height:22px;text-align:center;transform:scaleX(1.0267);transform-origin:50% 50%;">0</span>
<span style="left:23px;top:337px;width:98px;height:22px;line-height:22px;text-align:center;transform:scaleX(0.9723);transform-origin:50% 50%;">NAUTICA JEANS</span>
<span style="left:122px;top:337px;width:98px;height:22px;line-height:22px;text-align:center;transform:scaleX(0.9893);transform-origin:50% 50%;">IL014.1273</span>
<span style="left:221px;top:337px;width:78px;height:22px;line-height:22px;text-align:center;transform:scaleX(1.0194);transform-origin:50% 50%;">419D002T</span>
<span style="left:300px;top:337px;width:78px;height:22px;line-height:22px;text-align:center;transform:scaleX(1.0194);transform-origin:50% 50%;">419D002T</span>
<span style="left:382px;top:337px;width:95px;height:22px;line-height:22px;text-align:left;transform:scaleX(0.9991);transform-origin:0 50%;word-spacing:0.601px;">13 Şubat 2015 C...</span>
<span style="left:651px;top:337px;width:73px;height:22px;line-height:22px;text-align:center;transform:scaleX(1.0267);transform-origin:50% 50%;">561</span>
<span style="left:725px;top:337px;width:73px;height:22px;line-height:22px;text-align:center;transform:scaleX(1.0267);transform-origin:50% 50%;">625</span>
<span style="left:799px;top:337px;width:73px;height:22px;line-height:22px;text-align:center;transform:scaleX(1.0267);transform-origin:50% 50%;">0</span>
<span style="left:873px;top:337px;width:118px;height:22px;line-height:22px;text-align:center;transform:scaleX(0.9465);transform-origin:50% 50%;">PARÇA BASKI</span>
<span style="left:992px;top:337px;width:118px;height:22px;line-height:22px;text-align:center;transform:scaleX(0.9367);transform-origin:50% 50%;word-spacing:0.801px;">BAŞAK EMPRİME SE...</span>
<span style="left:1111px;top:337px;width:73px;height:22px;line-height:22px;text-align:center;transform:scaleX(1.0267);transform-origin:50% 50%;">625</span>
<span style="left:1185px;top:337px;width:73px;height:22px;line-height:22px;text-align:center;transform:scaleX(1.0267);transform-origin:50% 50%;">625</span>
<span style="left:1259px;top:337px;width:73px;height:22px;line-height:22px;text-align:center;transform:scaleX(1.0267);transform-origin:50% 50%;">0</span>
<span style="left:23px;top:360px;width:98px;height:22px;line-height:22px;text-align:center;transform:scaleX(0.9723);transform-origin:50% 50%;">NAUTICA JEANS</span>
<span style="left:122px;top:360px;width:98px;height:22px;line-height:22px;text-align:center;transform:scaleX(0.9893);transform-origin:50% 50%;">IL014.1273</span>
<span style="left:221px;top:360px;width:78px;height:22px;line-height:22px;text-align:center;transform:scaleX(1.0194);transform-origin:50% 50%;">419D002T</span>
<span style="left:300px;top:360px;width:78px;height:22px;line-height:22px;text-align:center;transform:scaleX(1.0194);transform-origin:50% 50%;">419D002T</span>
<span style="left:382px;top:360px;width:95px;height:22px;line-height:22px;text-align:left;transform:scaleX(0.9991);transform-origin:0 50%;word-spacing:0.601px;">13 Şubat 2015 C...</span>
<span style="left:651px;top:360px;width:73px;height:22px;line-height:22px;text-align:center;transform:scaleX(1.0267);transform-origin:50% 50%;">561</span>
<span style="left:725px;top:360px;width:73px;height:22px;line-height:22px;text-align:center;transform:scaleX(1.0267);transform-origin:50% 50%;">625</span>
<span style="left:799px;top:360px;width:73px;height:22px;line-height:22px;text-align:center;transform:scaleX(1.0267);transform-origin:50% 50%;">0</span>
<span style="left:873px;top:360px;width:118px;height:22px;line-height:22px;text-align:center;transform:scaleX(0.9519);transform-origin:50% 50%;">NAKIŞ</span>
<span style="left:992px;top:360px;width:118px;height:22px;line-height:22px;text-align:center;transform:scaleX(0.9885);transform-origin:50% 50%;word-spacing:1.517px;">İLDA NAKIŞ AYHAN...</span>
<span style="left:1111px;top:360px;width:73px;height:22px;line-height:22px;text-align:center;transform:scaleX(1.0267);transform-origin:50% 50%;">625</span>
<span style="left:1185px;top:360px;width:73px;height:22px;line-height:22px;text-align:center;transform:scaleX(1.0267);transform-origin:50% 50%;">625</span>
<span style="left:1259px;top:360px;width:73px;height:22px;line-height:22px;text-align:center;transform:scaleX(1.0267);transform-origin:50% 50%;">0</span>
<span style="left:23px;top:383px;width:98px;height:22px;line-height:22px;text-align:center;transform:scaleX(0.9723);transform-origin:50% 50%;">NAUTICA JEANS</span>
<span style="left:122px;top:383px;width:98px;height:22px;line-height:22px;text-align:center;transform:scaleX(0.9893);transform-origin:50% 50%;">IL014.1273</span>
<span style="left:221px;top:383px;width:78px;height:22px;line-height:22px;text-align:center;transform:scaleX(1.0194);transform-origin:50% 50%;">419D002T</span>
<span style="left:300px;top:383px;width:78px;height:22px;line-height:22px;text-align:center;transform:scaleX(1.0194);transform-origin:50% 50%;">419D002T</span>
<span style="left:382px;top:383px;width:95px;height:22px;line-height:22px;text-align:left;transform:scaleX(0.9991);transform-origin:0 50%;word-spacing:0.601px;">13 Şubat 2015 C...</span>
<span style="left:651px;top:383px;width:73px;height:22px;line-height:22px;text-align:center;transform:scaleX(1.0267);transform-origin:50% 50%;">561</span>
<span style="left:725px;top:383px;width:73px;height:22px;line-height:22px;text-align:center;transform:scaleX(1.0267);transform-origin:50% 50%;">625</span>
<span style="left:799px;top:383px;width:73px;height:22px;line-height:22px;text-align:center;transform:scaleX(1.0267);transform-origin:50% 50%;">0</span>
<span style="left:873px;top:383px;width:118px;height:22px;line-height:22px;text-align:center;transform:scaleX(0.9887);transform-origin:50% 50%;">İLİK DÜĞME</span>
<span style="left:992px;top:383px;width:118px;height:22px;line-height:22px;text-align:center;transform:scaleX(0.9664);transform-origin:50% 50%;word-spacing:1.035px;">YILDIZ İLİK DÜĞME...</span>
<span style="left:1111px;top:383px;width:73px;height:22px;line-height:22px;text-align:center;transform:scaleX(1.0267);transform-origin:50% 50%;">610</span>
<span style="left:1185px;top:383px;width:73px;height:22px;line-height:22px;text-align:center;transform:scaleX(1.0267);transform-origin:50% 50%;">610</span>
<span style="left:1259px;top:383px;width:73px;height:22px;line-height:22px;text-align:center;transform:scaleX(1.0267);transform-origin:50% 50%;">0</span>
<span style="left:23px;top:406px;width:98px;height:22px;line-height:22px;text-align:center;transform:scaleX(0.9723);transform-origin:50% 50%;">NAUTICA JEANS</span>
<span style="left:122px;top:406px;width:98px;height:22px;line-height:22px;text-align:center;transform:scaleX(0.9893);transform-origin:50% 50%;">IL014.1273</span>
<span style="left:221px;top:406px;width:78px;height:22px;line-height:22px;text-align:center;transform:scaleX(1.0194);transform-origin:50% 50%;">419D002T</span>
<span style="left:300px;top:406px;width:78px;height:22px;line-height:22px;text-align:center;transform:scaleX(1.0194);transform-origin:50% 50%;">419D002T</span>
<span style="left:382px;top:406px;width:95px;height:22px;line-height:22px;text-align:left;transform:scaleX(0.9991);transform-origin:0 50%;word-spacing:0.601px;">13 Şubat 2015 C...</span>
<span style="left:651px;top:406px;width:73px;height:22px;line-height:22px;text-align:center;transform:scaleX(1.0267);transform-origin:50% 50%;">561</span>
<span style="left:725px;top:406px;width:73px;height:22px;line-height:22px;text-align:center;transform:scaleX(1.0267);transform-origin:50% 50%;">625</span>
<span style="left:799px;top:406px;width:73px;height:22px;line-height:22px;text-align:center;transform:scaleX(1.0267);transform-origin:50% 50%;">0</span>
<span style="left:873px;top:406px;width:118px;height:22px;line-height:22px;text-align:center;transform:scaleX(1.0284);transform-origin:50% 50%;">DİKİM</span>
<span style="left:992px;top:406px;width:118px;height:22px;line-height:22px;text-align:center;transform:scaleX(0.9326);transform-origin:50% 50%;word-spacing:0.804px;">UIT TEKSTİL PAZ.SA...</span>
<span style="left:1111px;top:406px;width:73px;height:22px;line-height:22px;text-align:center;transform:scaleX(1.0267);transform-origin:50% 50%;">625</span>
<span style="left:1185px;top:406px;width:73px;height:22px;line-height:22px;text-align:center;transform:scaleX(1.0267);transform-origin:50% 50%;">610</span>
<span style="left:1259px;top:406px;width:73px;height:22px;line-height:22px;text-align:center;transform:scaleX(1.0267);transform-origin:50% 50%;">15</span>
<div style="left:23px;top:429px;width:98px;height:16px;overflow:hidden"><span style="left:0px;top:0px;width:98px;height:22px;line-height:22px;text-align:center;transform:scaleX(0.9723);transform-origin:50% 50%;">NAUTICA JEANS</span></div>
<div style="left:122px;top:429px;width:98px;height:16px;overflow:hidden"><span style="left:0px;top:0px;width:98px;height:22px;line-height:22px;text-align:center;transform:scaleX(0.9893);transform-origin:50% 50%;">IL015.0003</span></div>
<div style="left:221px;top:429px;width:78px;height:16px;overflow:hidden"><span style="left:0px;top:0px;width:78px;height:22px;line-height:22px;text-align:center;transform:scaleX(0.9903);transform-origin:50% 50%;">519K003T</span></div>
<div style="left:300px;top:429px;width:78px;height:16px;overflow:hidden"><span style="left:0px;top:0px;width:78px;height:22px;line-height:22px;text-align:center;transform:scaleX(0.9903);transform-origin:50% 50%;">519K003T</span></div>
<div style="left:382px;top:429px;width:95px;height:16px;overflow:hidden"><span style="left:0px;top:0px;width:95px;height:22px;line-height:22px;text-align:left;transform:scaleX(1.0291);transform-origin:0 50%;word-spacing:0.551px;">13 Mart 2015 Cu...</span></div>
<div style="left:651px;top:429px;width:73px;height:16px;overflow:hidden"><span style="left:0px;top:0px;width:73px;height:22px;line-height:22px;text-align:center;transform:scaleX(1.0267);transform-origin:50% 50%;">600</span></div>
<div style="left:725px;top:429px;width:73px;height:16px;overflow:hidden"><span style="left:0px;top:0px;width:73px;height:22px;line-height:22px;text-align:center;transform:scaleX(1.0267);transform-origin:50% 50%;">674</span></div>
<div style="left:799px;top:429px;width:73px;height:16px;overflow:hidden"><span style="left:0px;top:0px;width:73px;height:22px;line-height:22px;text-align:center;transform:scaleX(1.0267);transform-origin:50% 50%;">0</span></div>
<div style="left:873px;top:429px;width:118px;height:16px;overflow:hidden"><span style="left:0px;top:0px;width:118px;height:22px;line-height:22px;text-align:center;transform:scaleX(0.9519);transform-origin:50% 50%;">NAKIŞ</span></div>
<div style="left:992px;top:429px;width:118px;height:16px;overflow:hidden"><span style="left:0px;top:0px;width:118px;height:22px;line-height:22px;text-align:center;transform:scaleX(0.9502);transform-origin:50% 50%;word-spacing:1.316px;">KARACA NAKIŞ TEKT...</span></div>
<div style="left:1111px;top:429px;width:73px;height:16px;overflow:hidden"><span style="left:0px;top:0px;width:73px;height:22px;line-height:22px;text-align:center;transform:scaleX(1.0267);transform-origin:50% 50%;">674</span></div>
<div style="left:1185px;top:429px;width:73px;height:16px;overflow:hidden"><span style="left:0px;top:0px;width:73px;height:22px;line-height:22px;text-align:center;transform:scaleX(1.0267);transform-origin:50% 50%;">674</span></div>
<div style="left:1259px;top:429px;width:73px;height:16px;overflow:hidden"><span style="left:0px;top:0px;width:73px;height:22px;line-height:22px;text-align:center;transform:scaleX(1.0267);transform-origin:50% 50%;">0</span></div>
<span style="left:10px;top:469px;width:130px;height:18px;line-height:18px;text-align:left;font-size:11.5px;font-weight:700;color:#1edc9c;transform:scaleX(0.9384);transform-origin:0 50%;">İLK HAR.TAR.(GİDEN)</span>
<span style="left:412px;top:469px;width:130px;height:18px;line-height:18px;text-align:left;font-size:11.5px;font-weight:700;color:#111;transform:scaleX(0.9180);transform-origin:0 50%;">İLK HAR.TAR.(GELEN)</span>
<span style="left:138px;top:467px;width:150px;height:19px;line-height:19px;text-align:left;font-size:11px;transform:scaleX(0.9858);transform-origin:0 50%;">24.03.2015 00:00:00</span>
<span style="left:539px;top:467px;width:150px;height:19px;line-height:19px;text-align:left;font-size:11px;transform:scaleX(0.9809);transform-origin:0 50%;">9.04.2015 00:00:00</span>
<span style="left:23px;top:496px;width:298px;height:28px;line-height:28px;text-align:center;font-size:11px;color:#0a0a0a;transform:scaleX(0.9132);transform-origin:50% 50%;">CARİ</span>
<span style="left:322px;top:496px;width:118px;height:28px;line-height:28px;text-align:center;font-size:11px;color:#0a0a0a;transform:scaleX(0.9576);transform-origin:50% 50%;">VARYANT</span>
<span style="left:441px;top:496px;width:118px;height:28px;line-height:28px;text-align:center;font-size:11px;color:#0a0a0a;transform:scaleX(0.9502);transform-origin:50% 50%;">VARYANT KOD</span>
<span style="left:560px;top:496px;width:53px;height:28px;line-height:28px;text-align:center;font-size:11px;color:#0a0a0a;transform:scaleX(0.9138);transform-origin:50% 50%;">FIYAT</span>
<span style="left:614px;top:496px;width:48px;height:28px;line-height:28px;text-align:center;font-size:11px;color:#0a0a0a;transform:scaleX(0.8000);transform-origin:50% 50%;">...</span>
<span style="left:663px;top:496px;width:73px;height:28px;line-height:28px;text-align:center;font-size:11px;color:#0a0a0a;transform:scaleX(0.9471);transform-origin:50% 50%;">GİDEN</span>
<span style="left:737px;top:496px;width:73px;height:28px;line-height:28px;text-align:center;font-size:11px;color:#0a0a0a;transform:scaleX(0.8848);transform-origin:50% 50%;">GELEN</span>
<span style="left:811px;top:496px;width:73px;height:28px;line-height:28px;text-align:center;font-size:11px;color:#0a0a0a;transform:scaleX(0.9376);transform-origin:50% 50%;">SAGLAM</span>
<span style="left:885px;top:496px;width:73px;height:28px;line-height:28px;text-align:center;font-size:11px;color:#0a0a0a;transform:scaleX(0.8709);transform-origin:50% 50%;">2.KALİTE</span>
<span style="left:959px;top:496px;width:73px;height:28px;line-height:28px;text-align:center;font-size:11px;color:#0a0a0a;transform:scaleX(0.8964);transform-origin:50% 50%;">DEFOLU</span>
<div style="left:1033px;top:496px;width:51px;height:28px;overflow:hidden"><span style="left:0px;top:0px;width:74px;height:28px;line-height:28px;text-align:center;font-size:11px;color:#0a0a0a;transform:scaleX(0.8308);transform-origin:50% 50%;">LEKELİ</span></div>
<span style="left:23px;top:525px;width:298px;height:22px;line-height:22px;text-align:center;transform:scaleX(0.9431);transform-origin:50% 50%;">KARACA NAKIŞ TEKTİL DES.SAN.VE TİC.LTD ŞTİ</span>
<span style="left:322px;top:525px;width:118px;height:22px;line-height:22px;text-align:center;transform:scaleX(1.0138);transform-origin:50% 50%;word-spacing:0.518px;">4TO-1BW / 4TO / 4T...</span>
<span style="left:441px;top:525px;width:118px;height:22px;line-height:22px;text-align:center;transform:scaleX(1.0241);transform-origin:50% 50%;">V.155931639</span>
<span style="left:560px;top:525px;width:53px;height:22px;line-height:22px;text-align:center;transform:scaleX(0.9893);transform-origin:50% 50%;">0,025</span>
<span style="left:614px;top:525px;width:48px;height:22px;line-height:22px;text-align:center;transform:scaleX(0.8968);transform-origin:50% 50%;">TL</span>
<span style="left:663px;top:525px;width:73px;height:22px;line-height:22px;text-align:center;transform:scaleX(1.0267);transform-origin:50% 50%;">341</span>
<span style="left:737px;top:525px;width:73px;height:22px;line-height:22px;text-align:center;transform:scaleX(1.0267);transform-origin:50% 50%;">341</span>
<span style="left:811px;top:525px;width:73px;height:22px;line-height:22px;text-align:center;transform:scaleX(1.0267);transform-origin:50% 50%;">341</span>
<span style="left:885px;top:525px;width:73px;height:22px;line-height:22px;text-align:center;transform:scaleX(1.0267);transform-origin:50% 50%;">0</span>
<span style="left:959px;top:525px;width:73px;height:22px;line-height:22px;text-align:center;transform:scaleX(1.0267);transform-origin:50% 50%;">0</span>
<span style="left:1033px;top:525px;width:74px;height:22px;line-height:22px;text-align:center;transform:scaleX(1.0267);transform-origin:50% 50%;">0</span>
<span style="left:23px;top:548px;width:298px;height:22px;line-height:22px;text-align:center;transform:scaleX(0.9431);transform-origin:50% 50%;">KARACA NAKIŞ TEKTİL DES.SAN.VE TİC.LTD ŞTİ</span>
<span style="left:322px;top:548px;width:118px;height:22px;line-height:22px;text-align:center;transform:scaleX(1.0415);transform-origin:50% 50%;word-spacing:0.984px;">6MZ/8SH / 6MZ / 6...</span>
<span style="left:441px;top:548px;width:118px;height:22px;line-height:22px;text-align:center;transform:scaleX(1.0241);transform-origin:50% 50%;">V.155931655</span>
<span style="left:560px;top:548px;width:53px;height:22px;line-height:22px;text-align:center;transform:scaleX(0.9893);transform-origin:50% 50%;">0,025</span>
<span style="left:614px;top:548px;width:48px;height:22px;line-height:22px;text-align:center;transform:scaleX(0.8968);transform-origin:50% 50%;">TL</span>
<span style="left:663px;top:548px;width:73px;height:22px;line-height:22px;text-align:center;transform:scaleX(1.0267);transform-origin:50% 50%;">240</span>
<span style="left:737px;top:548px;width:73px;height:22px;line-height:22px;text-align:center;transform:scaleX(1.0267);transform-origin:50% 50%;">240</span>
<span style="left:811px;top:548px;width:73px;height:22px;line-height:22px;text-align:center;transform:scaleX(1.0267);transform-origin:50% 50%;">240</span>
<span style="left:885px;top:548px;width:73px;height:22px;line-height:22px;text-align:center;transform:scaleX(1.0267);transform-origin:50% 50%;">0</span>
<span style="left:959px;top:548px;width:73px;height:22px;line-height:22px;text-align:center;transform:scaleX(1.0267);transform-origin:50% 50%;">0</span>
<span style="left:1033px;top:548px;width:74px;height:22px;line-height:22px;text-align:center;transform:scaleX(1.0267);transform-origin:50% 50%;">0</span>
<span style="left:23px;top:571px;width:298px;height:22px;line-height:22px;text-align:center;transform:scaleX(0.9431);transform-origin:50% 50%;">KARACA NAKIŞ TEKTİL DES.SAN.VE TİC.LTD ŞTİ</span>
<span style="left:322px;top:571px;width:118px;height:22px;line-height:22px;text-align:center;transform:scaleX(1.0099);transform-origin:50% 50%;word-spacing:1.436px;">4QB/4NB / 4NB / 4N...</span>
<span style="left:441px;top:571px;width:118px;height:22px;line-height:22px;text-align:center;transform:scaleX(1.0241);transform-origin:50% 50%;">V.155931670</span>
<span style="left:560px;top:571px;width:53px;height:22px;line-height:22px;text-align:center;transform:scaleX(0.9893);transform-origin:50% 50%;">0,025</span>
<span style="left:614px;top:571px;width:48px;height:22px;line-height:22px;text-align:center;transform:scaleX(0.8968);transform-origin:50% 50%;">TL</span>
<span style="left:663px;top:571px;width:73px;height:22px;line-height:22px;text-align:center;transform:scaleX(1.0267);transform-origin:50% 50%;">246</span>
<span style="left:737px;top:571px;width:73px;height:22px;line-height:22px;text-align:center;transform:scaleX(1.0267);transform-origin:50% 50%;">246</span>
<span style="left:811px;top:571px;width:73px;height:22px;line-height:22px;text-align:center;transform:scaleX(1.0267);transform-origin:50% 50%;">246</span>
<span style="left:885px;top:571px;width:73px;height:22px;line-height:22px;text-align:center;transform:scaleX(1.0267);transform-origin:50% 50%;">0</span>
<span style="left:959px;top:571px;width:73px;height:22px;line-height:22px;text-align:center;transform:scaleX(1.0267);transform-origin:50% 50%;">0</span>
<span style="left:1033px;top:571px;width:74px;height:22px;line-height:22px;text-align:center;transform:scaleX(1.0267);transform-origin:50% 50%;">0</span>
<span style="left:65px;top:691px;width:101px;height:22px;line-height:22px;text-align:center;font-size:11px;color:#111;transform:scaleX(0.9885);transform-origin:50% 50%;">Tümünü Aç</span>
<span style="left:65px;top:720px;width:101px;height:22px;line-height:22px;text-align:center;font-size:11px;color:#111;transform:scaleX(0.9978);transform-origin:50% 50%;">Tümünü Kapat</span>
<span style="left:765px;top:693px;width:252px;height:23px;line-height:23px;text-align:center;font-size:11px;color:#111;transform:scaleX(0.9276);transform-origin:50% 50%;">DETAYDA KONTROL (GIDEN ve GELMEYEN)</span>
<span style="left:1023px;top:693px;width:104px;height:23px;line-height:23px;text-align:center;font-size:11px;color:#111;transform:scaleX(1.0137);transform-origin:50% 50%;">Listeden Çıkart</span>
<span style="left:1130px;top:693px;width:91px;height:23px;line-height:23px;text-align:center;font-size:11px;color:#111;transform:scaleX(0.9992);transform-origin:50% 50%;">Dahil Et</span>
<span style="left:247px;top:726px;width:120px;height:15px;line-height:15px;text-align:left;font-size:11px;color:#111;transform:scaleX(1.0390);transform-origin:0 50%;">Resim İzleme Aktif</span>
<span style="left:1040px;top:724px;width:200px;height:15px;line-height:15px;text-align:left;font-size:11px;color:#111;transform:scaleX(1.0113);transform-origin:0 50%;">Ekran Raporunda Hareket Detayı</span>
<span style="left:8px;top:749px;width:60px;height:20px;line-height:20px;text-align:left;font-size:9px;font-weight:700;color:#6f7080;transform:scaleX(1.0339);transform-origin:0 50%;">Hazır...</span>
</body></html>
